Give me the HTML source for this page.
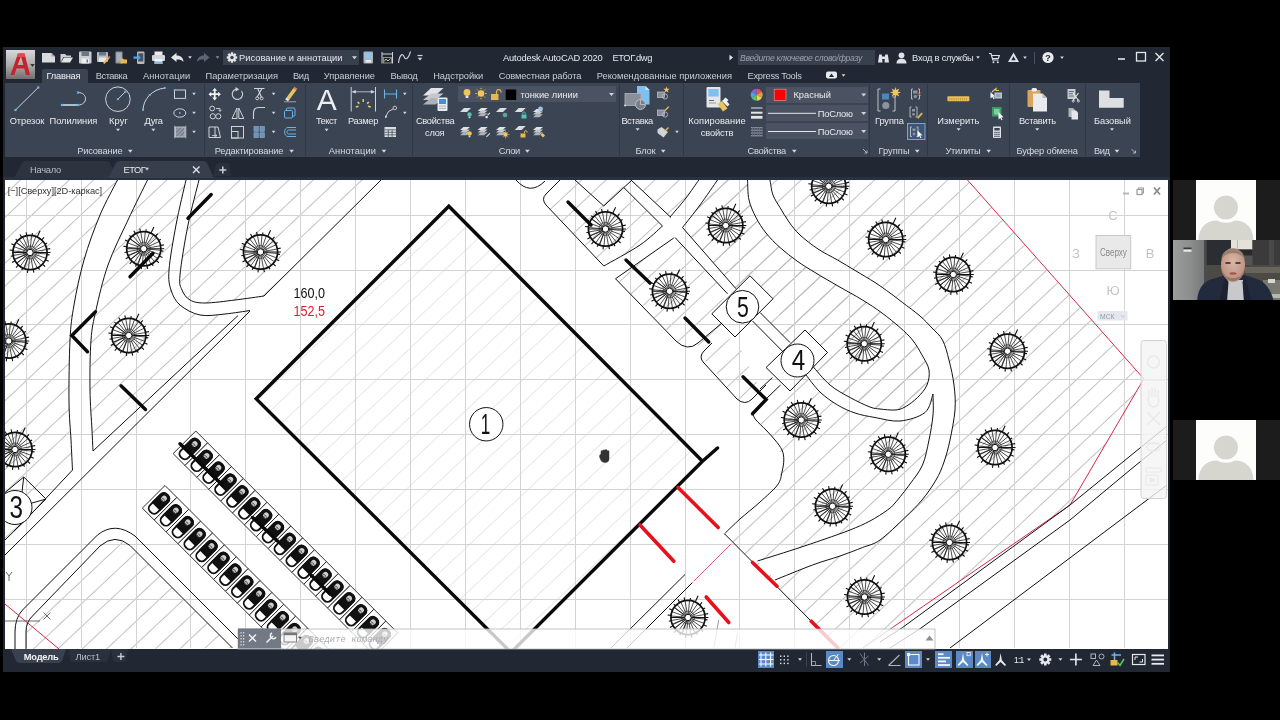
<!DOCTYPE html>
<html><head><meta charset="utf-8"><title>AutoCAD</title>
<style>
html,body{margin:0;padding:0;background:#000;}
body{width:1280px;height:720px;position:relative;overflow:hidden;font-family:"Liberation Sans","DejaVu Sans",sans-serif;}
.a,.t,svg{position:absolute;}
.t{white-space:nowrap;}
</style></head><body>
<div class="a" style="left:3px;top:47px;width:1167px;height:625px;background:#222833;"></div>
<div class="a" style="left:5px;top:83px;width:1135px;height:74px;background:#3b4453;"></div>
<div class="a" style="left:42px;top:69px;width:46px;height:15px;background:#3b4453;border-radius:2px 2px 0 0;"></div>
<div class="a" style="left:6px;top:50px;width:29px;height:29px;background:linear-gradient(180deg,#d9d9d9 0%,#a9a9a9 55%,#6f6f6f 100%);"></div>
<div class="a" style="left:223px;top:50px;width:136px;height:15px;background:#38404e;"></div>
<div class="a" style="left:738px;top:50px;width:137px;height:15px;background:#38404e;"></div>
<div class="a" style="left:204px;top:84px;width:1px;height:72px;background:#2f3644;"></div>
<div class="a" style="left:305px;top:84px;width:1px;height:72px;background:#2f3644;"></div>
<div class="a" style="left:412px;top:84px;width:1px;height:72px;background:#2f3644;"></div>
<div class="a" style="left:619px;top:84px;width:1px;height:72px;background:#2f3644;"></div>
<div class="a" style="left:683px;top:84px;width:1px;height:72px;background:#2f3644;"></div>
<div class="a" style="left:869px;top:84px;width:1px;height:72px;background:#2f3644;"></div>
<div class="a" style="left:927px;top:84px;width:1px;height:72px;background:#2f3644;"></div>
<div class="a" style="left:1009px;top:84px;width:1px;height:72px;background:#2f3644;"></div>
<div class="a" style="left:1085px;top:84px;width:1px;height:72px;background:#2f3644;"></div>
<div class="a" style="left:458px;top:86px;width:158px;height:16px;background:#4b5363;"></div>
<div class="a" style="left:766px;top:87px;width:102px;height:16px;background:#4b5363;"></div>
<div class="a" style="left:766px;top:105px;width:102px;height:16px;background:#4b5363;"></div>
<div class="a" style="left:766px;top:123px;width:102px;height:16px;background:#4b5363;"></div>
<div class="a" style="left:3px;top:177px;width:1167px;height:3px;background:#2b313c;"></div>
<svg style="left:0;top:157px" width="1170" height="23" viewBox="0 157 1170 23"><path d="M14 178 L22 163 Q23 161 26 161 L106 161 Q109 161 110 163 L117 178 Z" fill="#2d3440"/><path d="M108 178 L116 163 Q117 161 120 161 L203 161 Q206 161 207 163 L214 178 Z" fill="#373f4d"/><path d="M213 176 L216 165 Q217 163 219 163 L227 163 Q229 163 229.500 165 L231 176 Z" fill="#2b313c"/></svg>
<svg style="left:0;top:648px" width="300" height="24" viewBox="0 648 300 24"><path d="M11 649 L66 649 L62 661 Q61 663 58 663 L20 663 Q17 663 16 661 Z" fill="#39414f"/><path d="M68 649 L111 649 L108 660 Q107 662 105 662 L73 662 Q71 662 70 660 Z" fill="#2a313c"/><path d="M111 649 L128 649 L126 660 Q125 662 123 662 L116 662 Q114 662 113 660 Z" fill="#2a313c"/></svg>
<div class="a" style="left:758px;top:651px;width:16px;height:17px;background:#5a8ac6;"></div>
<div class="a" style="left:826px;top:651px;width:17px;height:17px;background:#5a8ac6;"></div>
<div class="a" style="left:905px;top:651px;width:17px;height:17px;background:#5a8ac6;"></div>
<div class="a" style="left:935px;top:651px;width:17px;height:17px;background:#5a8ac6;"></div>
<div class="a" style="left:955.5px;top:651px;width:17.0px;height:17px;background:#5a8ac6;"></div>
<div class="a" style="left:974.5px;top:651px;width:16.5px;height:17px;background:#5a8ac6;"></div>
<!--ICONS-->
<div class="a" style="left:5px;top:180px;width:1163px;height:469px;background:#fff;"></div><svg style="left:5px;top:180px;will-change:transform" width="1163" height="469" viewBox="5 180 1163 469"><defs>
<pattern id="h1" width="60" height="16.703" patternUnits="userSpaceOnUse" patternTransform="translate(954.28 391.41) rotate(-43.2)"><path d="M-1 8.351 L61 8.351" stroke="#b9b9b9" stroke-width="0.9" fill="none"/></pattern>
<pattern id="h2" width="60" height="16.703" patternUnits="userSpaceOnUse" patternTransform="translate(382.58 293.91) rotate(-43.2)"><path d="M-1 8.351 L61 8.351" stroke="#e4e4e4" stroke-width="0.9" fill="none"/></pattern>
<g id="tree">
<circle r="17.1" fill="none" stroke="#111" stroke-width="1.7"/>
<path d="M3.2 0.3 L16.9 1.5 M3.0 1.1 L16.0 5.8 M2.6 1.8 L13.9 9.8 M2.1 2.5 L10.9 13.0 M1.4 2.9 L7.2 15.4 M0.6 3.2 L3.0 16.7 M-0.3 3.2 L-1.5 16.9 M-1.1 3.0 L-5.8 16.0 M-1.8 2.6 L-9.8 13.9 M-2.5 2.1 L-13.0 10.9 M-2.9 1.4 L-15.4 7.2 M-3.2 0.6 L-16.7 3.0 M-3.2 -0.3 L-16.9 -1.5 M-3.0 -1.1 L-16.0 -5.8 M-2.6 -1.8 L-13.9 -9.8 M-2.1 -2.5 L-10.9 -13.0 M-1.4 -2.9 L-7.2 -15.4 M-0.6 -3.2 L-3.0 -16.7 M0.3 -3.2 L1.5 -16.9 M1.1 -3.0 L5.8 -16.0 M1.8 -2.6 L9.8 -13.9 M2.5 -2.1 L13.0 -10.9 M2.9 -1.4 L15.4 -7.2 M3.2 -0.6 L16.7 -3.0 M-1.2 3.0 L-6.4 15.8 M-2.5 2.0 L-13.4 10.5 M-2.9 1.3 L-15.6 6.6 M-2.6 -1.9 L-13.6 -10.2" stroke="#111" stroke-width="0.75" fill="none"/>
<path d="M16.9 2.1 L19.5 2.4 M15.4 7.2 L18.7 8.7 M12.4 11.6 L15.1 14.0 M8.2 14.9 L9.5 17.1 M3.2 16.7 L3.9 20.2 M-2.1 16.9 L-2.5 20.4 M-7.2 15.4 L-8.3 17.8 M-11.6 12.4 L-14.0 15.1 M-14.9 8.2 L-18.0 10.0 M-16.7 3.2 L-19.2 3.7 M-16.9 -2.1 L-20.4 -2.5 M-15.4 -7.2 L-18.7 -8.7 M-12.4 -11.6 L-14.3 -13.4 M-8.2 -14.9 L-10.0 -18.0 M-3.2 -16.7 L-3.9 -20.2 M2.1 -16.9 L2.4 -19.5 M7.2 -15.4 L10.1 -21.8 M11.6 -12.4 L14.0 -15.1 M14.9 -8.2 L17.1 -9.5 M16.7 -3.2 L20.2 -3.9 M-17 0 L-3.200 0 M3.200 0 L20.500 0" stroke="#111" stroke-width="1.1" fill="none"/>
<circle r="6.5" fill="none" stroke="#222" stroke-width="0.6"/>
<circle r="3.2" fill="#fff" stroke="#111" stroke-width="1"/>
</g>
<g id="car">
<rect x="0" y="0" width="16.8" height="32" fill="#fff" stroke="#222" stroke-width="0.9"/>
<rect x="3.300" y="5" width="10.400" height="24" rx="4.600" fill="#fff" stroke="#111" stroke-width="1.9"/>
<path d="M3.300 9.600 Q3.300 5 8.500 5 Q13.700 5 13.700 9.600 L13.700 20.500 L3.300 20.500 Z" fill="#111" stroke="#111" stroke-width="1.9"/>
<ellipse cx="8.500" cy="10" rx="2.700" ry="3" fill="#cfcfcf"/><path d="M6.500 11.200 Q8.500 9.400 10.500 11.200 M7 12.800 Q8.500 11.600 10 12.800" stroke="#333" stroke-width="0.7" fill="none"/>
</g>
</defs>
<path d="M5.0 180.0 L967.5 180.0 L1143.8 378.8 L1070.0 505.0 L892.5 627.5 L863.0 648.0 L5.0 648.0 Z" fill="url(#h1)" stroke="none"/>
<path d="M381.0 180.0 L264.0 296.0 L250.0 311.0 L238.0 315.6 L93.0 451.0 L72.5 470.0 L5.0 540.0 L5.0 648.0 L837.5 648.0 L815.0 625.0 L724.5 533.8 L740.0 519.0 L777.5 485.0 L783.8 460.0 L775.0 440.0 L756.0 420.0 L752.5 413.8 L766.0 399.5 L790.0 391.0 L827.5 352.5 L805.0 330.0 L790.0 342.5 L773.0 298.8 L750.0 275.8 L736.0 288.8 L682.5 227.5 L700.0 205.0 L717.5 180.0 Z" fill="#fff" stroke="none"/>
<path d="M117.5 180.0 L100.0 215.0 L84.0 260.0 L74.0 305.0 L70.0 340.0 L69.0 402.0 L71.0 440.0 L72.5 470.0 L93.0 451.0 L92.0 430.0 L90.0 390.0 L91.0 340.0 L96.0 310.0 L108.0 265.0 L128.0 220.0 L147.5 180.0 Z" fill="#fff" stroke="none"/>
<path d="M186.0 180.0 C184.3 187.5 178.8 210.0 176.0 225.0 C173.2 240.0 169.8 259.2 169.0 270.0 C168.2 280.8 169.2 284.2 171.0 290.0 C172.8 295.8 175.2 300.8 180.0 305.0 C184.8 309.2 192.5 313.5 200.0 315.0 C207.5 316.5 216.7 314.8 225.0 314.0 C233.3 313.2 245.8 311.1 250.0 310.5 L264 296 L264.0 296.0 C259.2 296.7 244.8 298.8 235.0 300.0 C225.2 301.2 212.5 303.0 205.0 303.0 C197.5 303.0 193.8 302.2 190.0 300.0 C186.2 297.8 183.7 294.2 182.0 290.0 C180.3 285.8 179.0 285.8 180.0 275.0 C181.0 264.2 184.8 240.8 188.0 225.0 C191.2 209.2 197.2 187.5 199.0 180.0 Z" fill="#fff" stroke="none"/>
<path d="M770.0 180.0 C770.5 182.5 771.3 190.4 773.0 195.0 C774.7 199.6 777.3 203.0 780.0 207.5 C782.7 212.0 785.7 217.4 789.0 222.0 C792.3 226.6 795.2 230.5 800.0 235.0 C804.8 239.5 811.8 244.8 818.0 249.0 C824.2 253.2 831.2 256.3 837.5 260.0 C843.8 263.7 849.8 267.2 856.0 271.0 C862.2 274.8 869.3 278.8 875.0 282.5 C880.7 286.2 885.4 289.7 890.0 293.0 C894.6 296.3 897.5 298.7 902.5 302.5 C907.5 306.3 915.1 311.8 920.0 316.0 C924.9 320.2 928.2 324.0 932.0 328.0 C935.8 332.0 939.7 334.7 942.5 340.0 C945.3 345.3 947.1 352.5 949.0 360.0 C950.9 367.5 953.0 376.7 954.0 385.0 C955.0 393.3 955.7 400.8 955.0 410.0 C954.3 419.2 951.8 431.3 950.0 440.0 C948.2 448.7 946.3 455.3 944.0 462.0 C941.7 468.7 939.7 473.7 936.0 480.0 C932.3 486.3 927.2 493.8 922.0 500.0 C916.8 506.2 912.0 510.8 905.0 517.5 C898.0 524.2 887.1 535.0 880.0 540.0 C872.9 545.0 869.2 544.8 862.5 547.5 C855.8 550.2 848.3 553.1 840.0 556.0 C831.7 558.9 823.3 561.0 812.5 565.0 C801.7 569.0 781.2 577.5 775.0 580.0 L757.5 561 L757.5 561.0 C764.6 558.8 788.8 551.2 800.0 547.5 C811.2 543.8 816.7 541.9 825.0 539.0 C833.3 536.1 842.5 533.0 850.0 530.0 C857.5 527.0 863.8 524.3 870.0 521.0 C876.2 517.7 883.3 513.0 887.5 510.0 C891.7 507.0 891.2 507.3 895.0 503.0 C898.8 498.7 905.4 490.3 910.0 484.0 C914.6 477.7 919.3 472.3 922.5 465.0 C925.7 457.7 927.2 448.3 929.0 440.0 C930.8 431.7 932.3 422.7 933.0 415.0 C933.7 407.3 933.0 397.5 933.0 394.0 L927 385 L927.0 385.0 C927.3 382.5 929.8 375.0 929.0 370.0 C928.2 365.0 924.8 360.0 922.0 355.0 C919.2 350.0 916.2 344.6 912.5 340.0 C908.8 335.4 905.1 332.0 900.0 327.5 C894.9 323.0 888.2 317.6 882.0 313.0 C875.8 308.4 869.8 304.5 862.5 300.0 C855.2 295.5 845.9 290.6 838.0 286.0 C830.1 281.4 821.8 276.7 815.0 272.5 C808.2 268.3 802.8 265.2 797.0 261.0 C791.2 256.8 785.2 252.2 780.0 247.5 C774.8 242.8 770.0 238.0 766.0 233.0 C762.0 228.0 758.8 223.0 756.0 217.5 C753.2 212.0 750.4 206.2 749.0 200.0 C747.6 193.8 747.8 183.3 747.5 180.0 Z" fill="#fff" stroke="none"/>
<path d="M929.0 370.0 C928.7 372.5 928.9 380.4 927.0 385.0 C925.1 389.6 921.2 393.8 917.5 397.5 C913.8 401.2 908.8 404.9 905.0 407.0 C901.2 409.1 899.2 409.7 895.0 410.0 C890.8 410.3 884.2 409.5 880.0 409.0 C875.8 408.5 875.0 408.9 870.0 407.0 C865.0 405.1 856.7 401.2 850.0 397.5 C843.3 393.8 836.2 390.2 830.0 385.0 C823.8 379.8 815.4 369.2 812.5 366.0 L806 375 L806.0 375.0 C808.3 377.8 814.8 387.0 820.0 392.0 C825.2 397.0 831.7 401.5 837.5 405.0 C843.3 408.5 848.8 410.9 855.0 413.0 C861.2 415.1 867.5 416.2 875.0 417.5 C882.5 418.8 891.7 421.8 900.0 421.0 C908.3 420.2 919.5 417.0 925.0 412.5 C930.5 408.0 931.7 397.1 933.0 394.0 Z" fill="#fff" stroke="none"/>
<path d="M448.8 206.2 L256.2 398.8 L511.0 652.5 L702.5 461.2 Z" fill="url(#h2)" stroke="none"/>
<path d="M26 650 L26 632 Q26 622 32.500 616 L100 546 Q115 533 130 545.500 L232.500 648 Z" fill="url(#h1)" stroke="none"/>
<path d="M560.0 180.0 L543.8 196.0 L550.0 210.0 L603.8 266.0 L640.0 245.0 L662.5 226.0 L623.8 187.5 L617.0 180.0 Z" fill="url(#h1)" stroke="none"/>
<path d="M615.5 278.8 L673.8 238.0 L727.5 293.8 L711.8 313.8 L725.0 325.0 L700.0 345.0 L687.5 347.5 L680.0 343.0 Z" fill="url(#h1)" stroke="none"/>
<path d="M702.5 357.5 L710.0 345.0 L735.0 337.0 L760.0 389.0 L747.5 402.5 L740.0 401.0 Z" fill="url(#h1)" stroke="none"/>
<path d="M682.5 227.5 L700.0 205.0 L717.5 180.0 L747.5 180.0 L749.0 200.0 L756.0 217.5 L766.0 233.0 L780.0 247.5 L797.0 261.0 L815.0 272.5 L838.0 286.0 L862.5 300.0 L882.0 313.0 L900.0 327.5 L912.5 340.0 L922.0 355.0 L929.0 370.0 L927.0 385.0 L917.5 397.5 L905.0 407.0 L895.0 410.0 L880.0 409.0 L870.0 407.0 L850.0 397.5 L830.0 385.0 L812.5 366.0 L827.5 352.5 L805.0 330.0 L790.0 342.5 L760.0 312.5 L773.0 298.8 L750.0 275.8 L736.0 288.8 Z" fill="url(#h1)" stroke="none"/>
<path d="M631.0 180.0 L671.0 217.5 L698.8 180.0 Z" fill="url(#h1)" stroke="none"/>
<path d="M26.5 180 L26.5 648 M81.5 180 L81.5 648 M136.5 180 L136.5 648 M190.5 180 L190.5 648 M245.5 180 L245.5 648 M300.5 180 L300.5 648 M355.5 180 L355.5 648 M410.5 180 L410.5 648 M465.5 180 L465.5 648 M520.5 180 L520.5 648 M575.5 180 L575.5 648 M630.5 180 L630.5 648 M685.5 180 L685.5 648 M739.5 180 L739.5 648 M794.5 180 L794.5 648 M849.5 180 L849.5 648 M904.5 180 L904.5 648 M959.5 180 L959.5 648 M1014.5 180 L1014.5 648 M1069.5 180 L1069.5 648 M1124.5 180 L1124.5 648 M5 215.5 L1168 215.5 M5 270.5 L1168 270.5 M5 324.5 L1168 324.5 M5 379.5 L1168 379.5 M5 434.5 L1168 434.5 M5 489.5 L1168 489.5 M5 544.5 L1168 544.5 M5 599.5 L1168 599.5" stroke="#d3d3d3" stroke-width="1" fill="none"/>
<path d="M117.5 180.0 C114.6 185.8 105.6 201.7 100.0 215.0 C94.4 228.3 88.3 245.0 84.0 260.0 C79.7 275.0 76.3 291.7 74.0 305.0 C71.7 318.3 70.8 323.8 70.0 340.0 C69.2 356.2 68.8 385.3 69.0 402.0 C69.2 418.7 70.4 428.7 71.0 440.0 C71.6 451.3 72.2 465.0 72.5 470.0 L26 519.5 L5 540" fill="none" stroke="#111" stroke-width="1" />
<path d="M147.5 180.0 C144.2 186.7 134.6 205.8 128.0 220.0 C121.4 234.2 113.3 250.0 108.0 265.0 C102.7 280.0 98.8 297.5 96.0 310.0 C93.2 322.5 92.0 326.7 91.0 340.0 C90.0 353.3 89.8 375.0 90.0 390.0 C90.2 405.0 91.5 419.8 92.0 430.0 C92.5 440.2 92.8 447.5 93.0 451.0 L238 315.6" fill="none" stroke="#111" stroke-width="1" />
<path d="M186.0 180.0 C184.3 187.5 178.8 210.0 176.0 225.0 C173.2 240.0 169.8 259.2 169.0 270.0 C168.2 280.8 169.2 284.2 171.0 290.0 C172.8 295.8 175.2 300.8 180.0 305.0 C184.8 309.2 192.5 313.5 200.0 315.0 C207.5 316.5 216.7 314.8 225.0 314.0 C233.3 313.2 245.8 311.1 250.0 310.5" fill="none" stroke="#111" stroke-width="1" />
<path d="M199.0 180.0 C197.2 187.5 191.2 209.2 188.0 225.0 C184.8 240.8 181.0 264.2 180.0 275.0 C179.0 285.8 180.3 285.8 182.0 290.0 C183.7 294.2 186.2 297.8 190.0 300.0 C193.8 302.2 197.5 303.0 205.0 303.0 C212.5 303.0 225.2 301.2 235.0 300.0 C244.8 298.8 259.2 296.7 264.0 296.0 L381 180" fill="none" stroke="#111" stroke-width="1" />
<path d="M5 555 L250 311" fill="none" stroke="#111" stroke-width="1" />
<path d="M15 650 L15 632 Q15 618 22.500 610 L97.500 535 Q115 521 135 536 L247 648" fill="none" stroke="#111" stroke-width="1" />
<path d="M26 650 L26 632 Q26 622 32.500 616 L100 546 Q115 533 130 545.500 L232.500 648" fill="none" stroke="#111" stroke-width="1" />
<path d="M5.0 492.5 L23.8 477.0 L46.0 499.0 L14.0 531.0" fill="none" stroke="#111" stroke-width="1" />
<path d="M23.750 477 L22 492 M46 499 L32 503" fill="none" stroke="#111" stroke-width="1" />
<circle cx="15" cy="507.5" r="17" fill="#fff" stroke="#111" stroke-width="1"/>
<path d="M770.0 180.0 C770.5 182.5 771.3 190.4 773.0 195.0 C774.7 199.6 777.3 203.0 780.0 207.5 C782.7 212.0 785.7 217.4 789.0 222.0 C792.3 226.6 795.2 230.5 800.0 235.0 C804.8 239.5 811.8 244.8 818.0 249.0 C824.2 253.2 831.2 256.3 837.5 260.0 C843.8 263.7 849.8 267.2 856.0 271.0 C862.2 274.8 869.3 278.8 875.0 282.5 C880.7 286.2 885.4 289.7 890.0 293.0 C894.6 296.3 897.5 298.7 902.5 302.5 C907.5 306.3 915.1 311.8 920.0 316.0 C924.9 320.2 928.2 324.0 932.0 328.0 C935.8 332.0 939.7 334.7 942.5 340.0 C945.3 345.3 947.1 352.5 949.0 360.0 C950.9 367.5 953.0 376.7 954.0 385.0 C955.0 393.3 955.7 400.8 955.0 410.0 C954.3 419.2 951.8 431.3 950.0 440.0 C948.2 448.7 946.3 455.3 944.0 462.0 C941.7 468.7 939.7 473.7 936.0 480.0 C932.3 486.3 927.2 493.8 922.0 500.0 C916.8 506.2 912.0 510.8 905.0 517.5 C898.0 524.2 887.1 535.0 880.0 540.0 C872.9 545.0 869.2 544.8 862.5 547.5 C855.8 550.2 848.3 553.1 840.0 556.0 C831.7 558.9 823.3 561.0 812.5 565.0 C801.7 569.0 781.2 577.5 775.0 580.0" fill="none" stroke="#111" stroke-width="1" />
<path d="M747.5 180.0 C747.8 183.3 747.6 193.8 749.0 200.0 C750.4 206.2 753.2 212.0 756.0 217.5 C758.8 223.0 762.0 228.0 766.0 233.0 C770.0 238.0 774.8 242.8 780.0 247.5 C785.2 252.2 791.2 256.8 797.0 261.0 C802.8 265.2 808.2 268.3 815.0 272.5 C821.8 276.7 830.1 281.4 838.0 286.0 C845.9 290.6 855.2 295.5 862.5 300.0 C869.8 304.5 875.8 308.4 882.0 313.0 C888.2 317.6 894.9 323.0 900.0 327.5 C905.1 332.0 908.8 335.4 912.5 340.0 C916.2 344.6 919.2 350.0 922.0 355.0 C924.8 360.0 928.2 365.0 929.0 370.0 C929.8 375.0 928.9 380.4 927.0 385.0 C925.1 389.6 921.2 393.8 917.5 397.5 C913.8 401.2 908.8 404.9 905.0 407.0 C901.2 409.1 899.2 409.7 895.0 410.0 C890.8 410.3 884.2 409.5 880.0 409.0 C875.8 408.5 875.0 408.9 870.0 407.0 C865.0 405.1 856.7 401.2 850.0 397.5 C843.3 393.8 836.2 390.2 830.0 385.0 C823.8 379.8 815.4 369.2 812.5 366.0" fill="none" stroke="#111" stroke-width="1" />
<path d="M933.0 394.0 C933.0 397.5 933.7 407.3 933.0 415.0 C932.3 422.7 930.8 431.7 929.0 440.0 C927.2 448.3 925.7 457.7 922.5 465.0 C919.3 472.3 914.6 477.7 910.0 484.0 C905.4 490.3 898.8 498.7 895.0 503.0 C891.2 507.3 891.7 507.0 887.5 510.0 C883.3 513.0 876.2 517.7 870.0 521.0 C863.8 524.3 857.5 527.0 850.0 530.0 C842.5 533.0 833.3 536.1 825.0 539.0 C816.7 541.9 811.2 543.8 800.0 547.5 C788.8 551.2 764.6 558.8 757.5 561.0" fill="none" stroke="#111" stroke-width="1" />
<path d="M806.0 375.0 C808.3 377.8 814.8 387.0 820.0 392.0 C825.2 397.0 831.7 401.5 837.5 405.0 C843.3 408.5 848.8 410.9 855.0 413.0 C861.2 415.1 867.5 416.2 875.0 417.5 C882.5 418.8 891.7 421.8 900.0 421.0 C908.3 420.2 919.5 417.0 925.0 412.5 C930.5 408.0 931.7 397.1 933.0 394.0" fill="none" stroke="#111" stroke-width="1" />
<path d="M752.5 413.8 C753.1 414.8 753.8 417.3 756.0 420.0 C758.2 422.7 762.8 426.7 766.0 430.0 C769.2 433.3 772.3 436.7 775.0 440.0 C777.7 443.3 780.5 446.7 782.0 450.0 C783.5 453.3 783.8 456.3 783.8 460.0 C783.8 463.7 783.0 467.8 782.0 472.0 C781.0 476.2 781.2 480.0 777.5 485.0 C773.8 490.0 766.2 496.3 760.0 502.0 C753.8 507.7 745.9 513.7 740.0 519.0 C734.1 524.3 727.1 531.3 724.5 533.8 L815 625" fill="none" stroke="#111" stroke-width="1" />
<path d="M777.5 480 L724.5 533.75" fill="none" stroke="#111" stroke-width="0" />
<path d="M750.0 275.8 L773.0 298.8 L735.0 337.0 L711.8 313.8 Z" fill="none" stroke="#111" stroke-width="1" />
<path d="M805.0 330.0 L827.5 352.5 L790.0 391.0 L766.0 367.5 Z" fill="none" stroke="#111" stroke-width="1" />
<path d="M760 312.500 L790 342.500 M752.500 321 L783.750 352.500" fill="none" stroke="#111" stroke-width="1" />
<path d="M736 288.750 L682.500 227.500 M727.500 293.750 L675 237.500" fill="none" stroke="#111" stroke-width="1" />
<path d="M772.500 377.500 L760 389 M780.500 385 L766 399" fill="none" stroke="#111" stroke-width="1" />
<path d="M682.5 227.5 C685.4 223.8 694.2 212.9 700.0 205.0 C705.8 197.1 714.6 184.2 717.5 180.0" fill="none" stroke="#111" stroke-width="1" />
<path d="M670.0 217.0 C672.7 213.8 681.2 204.2 686.0 198.0 C690.8 191.8 696.6 183.0 698.8 180.0" fill="none" stroke="#111" stroke-width="1" />
<path d="M662.500 226 L623.750 187.500 M671 217.500 L631 180" fill="none" stroke="#111" stroke-width="1" />
<path d="M662.5 226.0 C658.8 229.2 649.8 238.3 640.0 245.0 C630.2 251.7 609.8 262.5 603.8 266.0" fill="none" stroke="#111" stroke-width="1" />
<path d="M673.750 238 L615.500 278.750" fill="none" stroke="#111" stroke-width="1" />
<path d="M560 180 L546 194 Q541 199 546 205 L603.750 266" fill="none" stroke="#111" stroke-width="1" />
<path d="M575 180 L603.750 206 L632 180" fill="none" stroke="#111" stroke-width="1" />
<path d="M516 180 Q530 196 545 181" fill="none" stroke="#111" stroke-width="1" />
<path d="M615.500 278.750 L676 341 Q687.500 352 698 343 L722 323" fill="none" stroke="#111" stroke-width="1" />
<path d="M711.750 313.750 L727.500 293.750" fill="none" stroke="#111" stroke-width="0" />
<path d="M712 343 L704 351 Q698 357 704 363 L737 399 Q745 406 752 399 L766 385" fill="none" stroke="#111" stroke-width="1" />
<path d="M967.5 180.0 L1143.8 378.8 L1070.0 505.0 L892.5 627.5 L863.0 648.0" fill="none" stroke="#d8274a" stroke-width="1" />
<path d="M5 604 L59 649" fill="none" stroke="#d8274a" stroke-width="1" />
<path d="M731.250 543.750 L693.750 581.250" fill="none" stroke="#e0607a" stroke-width="1" />
<path d="M920 610 L892.500 627.500" fill="none" stroke="#d8274a" stroke-width="0" />
<path d="M1167 426 L1070 505 L902.500 627.500 L880 642" fill="none" stroke="#111" stroke-width="1" />
<path d="M1167 440 L1130 470 L1070 520 L920 628.750 L890 648" fill="none" stroke="#111" stroke-width="1" />
<path d="M1167 485 L950 648" fill="none" stroke="#111" stroke-width="1" />
<path d="M685 574.500 L611 648 M692.500 582.500 L627 648" fill="none" stroke="#111" stroke-width="1" />
<path d="M718.750 620 L713.750 647.500 M737.500 632.500 L735 648" fill="none" stroke="#555" stroke-width="0.6" />
<g transform="translate(195.75 431) rotate(45)"><use href="#car" x="0.0" y="0"/><use href="#car" x="16.8" y="0"/><use href="#car" x="33.6" y="0"/><use href="#car" x="50.4" y="0"/><use href="#car" x="67.2" y="0"/><use href="#car" x="84.0" y="0"/><use href="#car" x="100.8" y="0"/><use href="#car" x="117.6" y="0"/><use href="#car" x="134.4" y="0"/><use href="#car" x="151.2" y="0"/><use href="#car" x="168.0" y="0"/><use href="#car" x="184.8" y="0"/><use href="#car" x="201.6" y="0"/><use href="#car" x="218.4" y="0"/><use href="#car" x="235.2" y="0"/><use href="#car" x="252.0" y="0"/><use href="#car" x="268.8" y="0"/></g>
<g transform="translate(165 485.5) rotate(45)"><use href="#car" x="0.0" y="0"/><use href="#car" x="16.8" y="0"/><use href="#car" x="33.6" y="0"/><use href="#car" x="50.4" y="0"/><use href="#car" x="67.2" y="0"/><use href="#car" x="84.0" y="0"/><use href="#car" x="100.8" y="0"/><use href="#car" x="117.6" y="0"/><use href="#car" x="134.4" y="0"/><use href="#car" x="151.2" y="0"/><use href="#car" x="168.0" y="0"/><use href="#car" x="184.8" y="0"/><use href="#car" x="201.6" y="0"/><use href="#car" x="218.4" y="0"/><use href="#car" x="235.2" y="0"/></g>
<use href="#tree" transform="translate(30 252.5)"/>
<use href="#tree" transform="translate(143.75 248.75)"/>
<use href="#tree" transform="translate(260.5 252)"/>
<use href="#tree" transform="translate(128.75 335.5)"/>
<use href="#tree" transform="translate(8.75 341)"/>
<use href="#tree" transform="translate(15 449.5)"/>
<use href="#tree" transform="translate(605.5 229)"/>
<use href="#tree" transform="translate(725.75 225.5)"/>
<use href="#tree" transform="translate(828.75 186.25)"/>
<use href="#tree" transform="translate(885.75 239.5)"/>
<use href="#tree" transform="translate(669.5 291.25)"/>
<use href="#tree" transform="translate(864.25 343.75)"/>
<use href="#tree" transform="translate(953.25 274.5)"/>
<use href="#tree" transform="translate(1007.5 351.25)"/>
<use href="#tree" transform="translate(801.25 420)"/>
<use href="#tree" transform="translate(888.25 454.25)"/>
<use href="#tree" transform="translate(832.5 506.25)"/>
<use href="#tree" transform="translate(995 447.5)"/>
<use href="#tree" transform="translate(688 617.5)"/>
<use href="#tree" transform="translate(864.5 597)"/>
<use href="#tree" transform="translate(949.5 542.5)"/>
<path d="M188.0 218.2 L211.2 194.5" stroke="#0a0a0a" stroke-width="3.4" fill="none" stroke-linecap="round" stroke-linejoin="miter"/>
<path d="M130.0 276.8 L153.0 253.2" stroke="#0a0a0a" stroke-width="3.4" fill="none" stroke-linecap="round" stroke-linejoin="miter"/>
<path d="M95.5 311.8 L71.8 335.5 L87.5 351.8" stroke="#0a0a0a" stroke-width="3.4" fill="none" stroke-linecap="round" stroke-linejoin="miter"/>
<path d="M121.0 385.8 L145.5 409.5" stroke="#0a0a0a" stroke-width="3.4" fill="none" stroke-linecap="round" stroke-linejoin="miter"/>
<path d="M568.0 202.0 L591.0 225.0" stroke="#0a0a0a" stroke-width="3.4" fill="none" stroke-linecap="round" stroke-linejoin="miter"/>
<path d="M626.0 260.0 L650.0 283.0" stroke="#0a0a0a" stroke-width="3.4" fill="none" stroke-linecap="round" stroke-linejoin="miter"/>
<path d="M685.0 318.0 L708.8 342.0" stroke="#0a0a0a" stroke-width="3.4" fill="none" stroke-linecap="round" stroke-linejoin="miter"/>
<path d="M743.0 376.8 L766.2 399.5 L752.5 413.8" stroke="#0a0a0a" stroke-width="3.4" fill="none" stroke-linecap="round" stroke-linejoin="miter"/>
<path d="M180.0 443.8 L222.5 485.0" stroke="#0a0a0a" stroke-width="3.4" fill="none" stroke-linecap="round" stroke-linejoin="miter"/>
<path d="M252.5 517.5 L277.5 541.0" stroke="#0a0a0a" stroke-width="3.4" fill="none" stroke-linecap="round" stroke-linejoin="miter"/>
<path d="M311.0 575.0 L330.0 594.0" stroke="#0a0a0a" stroke-width="3.4" fill="none" stroke-linecap="round" stroke-linejoin="miter"/>
<path d="M448.8 206.2 L256.2 398.8 L511.0 652.5 L702.5 461.2 Z M702.500 461.250 L717.500 448" stroke="#0a0a0a" stroke-width="3.4" fill="none" stroke-linejoin="miter" stroke-linecap="round"/>
<path d="M678.0 487.5 L718.2 527.5" stroke="#e8101c" stroke-width="3.6" fill="none" stroke-linecap="round" stroke-linejoin="miter"/>
<path d="M640.0 525.0 L673.8 561.2" stroke="#e8101c" stroke-width="3.6" fill="none" stroke-linecap="round" stroke-linejoin="miter"/>
<path d="M752.5 562.5 L777.0 586.2" stroke="#e8101c" stroke-width="3.6" fill="none" stroke-linecap="round" stroke-linejoin="miter"/>
<path d="M706.2 597.0 L728.8 622.5" stroke="#e8101c" stroke-width="3.6" fill="none" stroke-linecap="round" stroke-linejoin="miter"/>
<path d="M811.2 621.2 L837.5 647.5" stroke="#e8101c" stroke-width="3.6" fill="none" stroke-linecap="round" stroke-linejoin="miter"/>
<circle cx="486.25" cy="424.25" r="16.7" fill="#fff" stroke="#111" stroke-width="1"/>
<circle cx="742.5" cy="306.75" r="16.3" fill="#fff" stroke="#111" stroke-width="1"/>
<circle cx="797.5" cy="360.5" r="16.5" fill="#fff" stroke="#111" stroke-width="1"/>
<text x="485.600" y="433.700" font-family="Liberation Sans, sans-serif" font-size="29" text-anchor="middle" fill="#111" textLength="9.5" lengthAdjust="spacingAndGlyphs">1</text>
<text x="742.800" y="316.700" font-family="Liberation Sans, sans-serif" font-size="29.5" text-anchor="middle" fill="#111" textLength="11.8" lengthAdjust="spacingAndGlyphs">5</text>
<text x="798.500" y="370.200" font-family="Liberation Sans, sans-serif" font-size="29" text-anchor="middle" fill="#111" textLength="13.5" lengthAdjust="spacingAndGlyphs">4</text>
<text x="16.200" y="517.500" font-family="Liberation Sans, sans-serif" font-size="31" text-anchor="middle" fill="#111" textLength="13.5" lengthAdjust="spacingAndGlyphs">3</text>
<text x="293.500" y="298" font-family="Liberation Sans, sans-serif" font-size="14.5" fill="#111" textLength="31.5" lengthAdjust="spacingAndGlyphs">160,0</text>
<text x="293.500" y="316" font-family="Liberation Sans, sans-serif" font-size="14.5" fill="#d8202c" textLength="31.5" lengthAdjust="spacingAndGlyphs">152,5</text>
<text x="7.700" y="193.500" font-family="Liberation Sans, sans-serif" font-size="9.300" fill="#333" textLength="94.5" lengthAdjust="spacing">[−][Сверху][2D-каркас]</text>
<path d="M5 621 L40 621" fill="none" stroke="#444" stroke-width="0.8" />
<path d="M43.500 612.500 L50.500 619.500 M50.500 612.500 L43.500 619.500" fill="none" stroke="#444" stroke-width="0.8" />
<path d="M6 572 L9 576 L12 572 M9 576 L9 581" fill="none" stroke="#444" stroke-width="0.8" />
<path d="M601 454 L601 451.500 Q601 450.500 602 450.500 Q603 450.500 603 451.500 L603 450.800 Q603 449.800 604 449.800 Q605 449.800 605 450.800 L605 450.600 Q605 449.600 606 449.600 Q607 449.600 607 450.600 L607 451.400 Q607 450.600 608 450.600 Q609 450.600 609 451.600 L609 459 Q609 462.500 605 462.500 Q601.500 462.500 600.500 459.500 L599.500 456.500 Q599.500 454.500 601 454 Z" fill="#333" stroke="#333" stroke-width="0.5" />
<rect x="1096" y="235.5" width="34.700" height="33.300" fill="#e9e9e9" stroke="#c9c9c9" stroke-width="1"/>
<text x="1113" y="220" font-family="Liberation Sans, sans-serif" font-size="13" text-anchor="middle" fill="#c4c4c4">С</text>
<text x="1076" y="257.5" font-family="Liberation Sans, sans-serif" font-size="13" text-anchor="middle" fill="#c4c4c4">З</text>
<text x="1150" y="257.5" font-family="Liberation Sans, sans-serif" font-size="13" text-anchor="middle" fill="#c4c4c4">В</text>
<text x="1113" y="295" font-family="Liberation Sans, sans-serif" font-size="13" text-anchor="middle" fill="#c4c4c4">Ю</text>
<text x="1113.400" y="256" font-family="Liberation Sans, sans-serif" font-size="10" text-anchor="middle" fill="#8a8a8a" textLength="27" lengthAdjust="spacingAndGlyphs">Сверху</text>
<rect x="1097.500" y="311" width="30" height="9.500" fill="#e6e6ee" stroke="none"/>
<text x="1100" y="319" font-family="Liberation Sans, sans-serif" font-size="7.500" fill="#9a9aa5" textLength="14.5" lengthAdjust="spacingAndGlyphs">МСК</text>
<path d="M1121 315 L1123 317.500 L1125 315" fill="none" stroke="#c0c0c8" stroke-width="0.8" />
<path d="M1123 193.500 L1129 193.500" fill="none" stroke="#b8b8b8" stroke-width="2" />
<rect x="1138.500" y="188" width="5" height="5" fill="none" stroke="#9a9a9a" stroke-width="1"/><rect x="1137" y="189.500" width="5" height="5" fill="#fff" stroke="#9a9a9a" stroke-width="1.2"/>
<path d="M1154 187.500 L1160 194.500 M1160 187.500 L1154 194.500" fill="none" stroke="#8a8a8a" stroke-width="1.8" />
<rect x="1141" y="340.500" width="25.500" height="158" rx="3" fill="#f4f4f4" fill-opacity="0.8" stroke="#d2d2d2" stroke-width="1"/>
<path d="M1143 380 L1164.500 380" fill="none" stroke="#e8e8e8" stroke-width="1" />
<circle cx="1153.500" cy="362" r="6" fill="none" stroke="#e9e9e9" stroke-width="1.5"/>
<path d="M1149 398 L1149 390 M1152 397 L1152 388 M1155 397 L1155 388 M1158 398 L1158 390 M1148 398 Q1148 407 1153.500 407 Q1159 407 1159 398" fill="none" stroke="#e8e8e8" stroke-width="1.3" />
<path d="M1147 412 L1160 425 M1160 412 L1147 425" fill="none" stroke="#e9e9e9" stroke-width="1.5" />
<ellipse cx="1153.500" cy="447" rx="7" ry="4" fill="none" stroke="#e9e9e9" stroke-width="1.3"/>
<rect x="1146" y="468" width="15" height="4" fill="none" stroke="#e9e9e9" stroke-width="1"/><rect x="1146" y="475" width="12" height="10" fill="none" stroke="#e9e9e9" stroke-width="1"/>
<path d="M1150 477.500 L1155 480 L1150 482.500 Z" fill="#ececec" stroke="#e9e9e9" stroke-width="1" /></svg>

<div class="a" style="left:1173px;top:180px;width:107px;height:60px;background:#1c1c1c;"></div>
<svg style="left:1196px;top:180px;" width="60" height="60" viewBox="0 0 60 60"><rect width="60" height="60" fill="#fdfdfb"/><circle cx="30" cy="27.5" r="12" fill="#d6d6cf"/><path d="M2.500 60 C3 45 13 40.500 21 40.500 C26 43.500 34 43.500 39 40.500 C47 40.500 57 45 57.500 60 Z" fill="#d6d6cf"/></svg>
<div class="a" style="left:1173px;top:420px;width:107px;height:60px;background:#1c1c1c;"></div>
<svg style="left:1196px;top:420px;" width="60" height="60" viewBox="0 0 60 60"><rect width="60" height="60" fill="#fdfdfb"/><circle cx="30" cy="27.5" r="12" fill="#d6d6cf"/><path d="M2.500 60 C3 45 13 40.500 21 40.500 C26 43.500 34 43.500 39 40.500 C47 40.500 57 45 57.500 60 Z" fill="#d6d6cf"/></svg>
<svg style="left:1173px;top:240px;" width="107" height="60" viewBox="0 0 107 60">
<defs>
<filter id="bl" x="-5%" y="-5%" width="110%" height="110%"><feGaussianBlur stdDeviation="0.7"/></filter>
<linearGradient id="fr" x1="0" x2="1" y1="0" y2="0"><stop offset="0" stop-color="#c9c9c7"/><stop offset="0.08" stop-color="#9a9c9b"/><stop offset="0.6" stop-color="#8b8e8d"/><stop offset="1" stop-color="#767978"/></linearGradient>
<radialGradient id="fc" cx="0.5" cy="0.4" r="0.6"><stop offset="0" stop-color="#d9b6a6"/><stop offset="1" stop-color="#b98f7e"/></radialGradient>
<clipPath id="cp"><rect width="107" height="60"/></clipPath>
</defs>
<g clip-path="url(#cp)"><g filter="url(#bl)">
<rect x="-2" y="-2" width="111" height="64" fill="#55544f"/>
<rect x="31" y="-2" width="27" height="27.500" fill="#2c2f31"/>
<rect x="58" y="-2" width="21.500" height="11.500" fill="#e4e1d9"/>
<rect x="64" y="-2" width="1" height="11.500" fill="#bdb9b0"/>
<rect x="58" y="9.500" width="21.500" height="6" fill="#2a2b2c"/>
<rect x="79.500" y="-2" width="30" height="28" fill="#3a3b3b"/>
<rect x="96" y="-2" width="5" height="28" fill="#4a4a48"/>
<rect x="33" y="25" width="76" height="18" fill="#4d4a45"/>
<rect x="72" y="27" width="36" height="6" fill="#6a655c"/>
<rect x="90" y="40" width="20" height="22" fill="#77786f"/>
<rect x="95" y="39" width="7" height="4" fill="#d8d8d0"/>
<rect x="98" y="54" width="12" height="4" fill="#b5b8ad"/>
<rect x="-2" y="-2" width="33" height="64" fill="url(#fr)"/>
<rect x="31" y="-2" width="2.500" height="64" fill="#4c4e4e"/>
<rect x="10.500" y="7.500" width="8" height="2" fill="#3b3b3b"/>
<rect x="10.500" y="9.500" width="8" height="2.200" fill="#ecece8"/>
<path d="M24 62 C25 47 31 41 41 38.500 L52 35 L72 35 L84 39 C93 42 98 50 101 62 Z" fill="#242b3d"/>
<path d="M53.500 40 L70.500 40 L71 62 L53.500 62 Z" fill="#c9c9cc"/>
<path d="M52 36 L55.500 42 L54 62 L46 62 Z" fill="#1d2333"/>
<path d="M72 36 L69.500 42 L71 62 L79 62 Z" fill="#1d2333"/>
<ellipse cx="60" cy="25" rx="12" ry="17" fill="url(#fc)"/>
<path d="M48.500 20 C48 5 72 5 71.500 20 C69 11 51 11 48.500 20 Z" fill="#9a8071"/>
<path d="M49 29 C50 45 70 45 71 29 C69 36 66 38 60 38 C54 38 51 36 49 29 Z" fill="#9b7565"/>
<ellipse cx="60" cy="33.500" rx="3.500" ry="1.300" fill="#a8544f"/>
<rect x="52.500" y="22" width="5" height="2" fill="#5a4038"/><rect x="62.500" y="22" width="5" height="2" fill="#5a4038"/>
</g></g>
</svg>

<div class="a" style="left:0;top:0;width:1280px;height:720px;will-change:transform">
<span class="t" style="left:46.5px;top:70.7px;font-size:9.3px;line-height:11px;color:#f0f2f5;letter-spacing:-0.23px;">Главная</span>
<span class="t" style="left:95.7px;top:70.7px;font-size:9.3px;line-height:11px;color:#c9cdd4;letter-spacing:-0.44px;">Вставка</span>
<span class="t" style="left:143.0px;top:70.7px;font-size:9.3px;line-height:11px;color:#c9cdd4;letter-spacing:0.10px;">Аннотации</span>
<span class="t" style="left:205.5px;top:70.7px;font-size:9.3px;line-height:11px;color:#c9cdd4;letter-spacing:-0.04px;">Параметризация</span>
<span class="t" style="left:293.0px;top:70.7px;font-size:9.3px;line-height:11px;color:#c9cdd4;letter-spacing:-0.38px;">Вид</span>
<span class="t" style="left:323.7px;top:70.7px;font-size:9.3px;line-height:11px;color:#c9cdd4;letter-spacing:-0.04px;">Управление</span>
<span class="t" style="left:390.5px;top:70.7px;font-size:9.3px;line-height:11px;color:#c9cdd4;letter-spacing:-0.22px;">Вывод</span>
<span class="t" style="left:433.2px;top:70.7px;font-size:9.3px;line-height:11px;color:#c9cdd4;letter-spacing:-0.12px;">Надстройки</span>
<span class="t" style="left:498.7px;top:70.7px;font-size:9.3px;line-height:11px;color:#c9cdd4;letter-spacing:-0.15px;">Совместная работа</span>
<span class="t" style="left:596.7px;top:70.7px;font-size:9.3px;line-height:11px;color:#c9cdd4;letter-spacing:0.01px;">Рекомендованные приложения</span>
<span class="t" style="left:747.5px;top:70.7px;font-size:9.3px;line-height:11px;color:#c9cdd4;letter-spacing:-0.28px;">Express Tools</span>
<span class="t" style="left:239.0px;top:52.7px;font-size:9.3px;line-height:11px;color:#e6e9ed;letter-spacing:0.04px;">Рисование и аннотации</span>
<span class="t" style="left:503.0px;top:52.7px;font-size:9.3px;line-height:11px;color:#e6e9ed;letter-spacing:-0.16px;">Autodesk AutoCAD 2020</span>
<span class="t" style="left:612.5px;top:52.7px;font-size:9.3px;line-height:11px;color:#e6e9ed;letter-spacing:-0.34px;">ЕТОГ.dwg</span>
<span class="t" style="left:740.0px;top:53.2px;font-size:8.6px;line-height:10px;color:#9aa1ad;letter-spacing:-0.25px;font-style:italic;">Введите ключевое слово/фразу</span>
<span class="t" style="left:912.0px;top:52.7px;font-size:9.3px;line-height:11px;color:#e6e9ed;letter-spacing:-0.21px;">Вход в службы</span>
<span class="t" style="left:9.7px;top:115.8px;font-size:9.3px;line-height:11px;color:#e8ebef;letter-spacing:-0.06px;">Отрезок</span>
<span class="t" style="left:49.5px;top:115.8px;font-size:9.3px;line-height:11px;color:#e8ebef;letter-spacing:-0.05px;">Полилиния</span>
<span class="t" style="left:109.0px;top:115.8px;font-size:9.3px;line-height:11px;color:#e8ebef;letter-spacing:0.12px;">Круг</span>
<span class="t" style="left:144.6px;top:115.8px;font-size:9.3px;line-height:11px;color:#e8ebef;letter-spacing:-0.40px;">Дуга</span>
<span class="t" style="left:315.9px;top:115.8px;font-size:9.3px;line-height:11px;color:#e8ebef;letter-spacing:-0.50px;">Текст</span>
<span class="t" style="left:348.0px;top:115.8px;font-size:9.3px;line-height:11px;color:#e8ebef;letter-spacing:-0.33px;">Размер</span>
<span class="t" style="left:415.9px;top:115.8px;font-size:9.3px;line-height:11px;color:#e8ebef;letter-spacing:-0.30px;">Свойства</span>
<span class="t" style="left:425.0px;top:128.0px;font-size:9.3px;line-height:11px;color:#e8ebef;letter-spacing:-0.27px;">слоя</span>
<span class="t" style="left:621.4px;top:115.8px;font-size:9.3px;line-height:11px;color:#e8ebef;letter-spacing:-0.47px;">Вставка</span>
<span class="t" style="left:688.3px;top:115.8px;font-size:9.3px;line-height:11px;color:#e8ebef;letter-spacing:0.08px;">Копирование</span>
<span class="t" style="left:700.8px;top:128.0px;font-size:9.3px;line-height:11px;color:#e8ebef;letter-spacing:-0.17px;">свойств</span>
<span class="t" style="left:875.0px;top:115.8px;font-size:9.3px;line-height:11px;color:#e8ebef;letter-spacing:-0.11px;">Группа</span>
<span class="t" style="left:937.3px;top:115.8px;font-size:9.3px;line-height:11px;color:#e8ebef;letter-spacing:0.00px;">Измерить</span>
<span class="t" style="left:1019.0px;top:115.8px;font-size:9.3px;line-height:11px;color:#e8ebef;letter-spacing:-0.34px;">Вставить</span>
<span class="t" style="left:1094.0px;top:115.8px;font-size:9.3px;line-height:11px;color:#e8ebef;letter-spacing:-0.07px;">Базовый</span>
<span class="t" style="left:77.3px;top:146.0px;font-size:9.3px;line-height:11px;color:#d5d9df;letter-spacing:-0.19px;">Рисование</span>
<span class="t" style="left:214.7px;top:146.0px;font-size:9.3px;line-height:11px;color:#d5d9df;letter-spacing:-0.16px;">Редактирование</span>
<span class="t" style="left:328.8px;top:146.0px;font-size:9.3px;line-height:11px;color:#d5d9df;letter-spacing:0.08px;">Аннотации</span>
<span class="t" style="left:498.7px;top:146.0px;font-size:9.3px;line-height:11px;color:#d5d9df;letter-spacing:-0.33px;">Слои</span>
<span class="t" style="left:635.6px;top:146.0px;font-size:9.3px;line-height:11px;color:#d5d9df;letter-spacing:-0.29px;">Блок</span>
<span class="t" style="left:747.5px;top:146.0px;font-size:9.3px;line-height:11px;color:#d5d9df;letter-spacing:-0.29px;">Свойства</span>
<span class="t" style="left:878.4px;top:146.0px;font-size:9.3px;line-height:11px;color:#d5d9df;letter-spacing:0.05px;">Группы</span>
<span class="t" style="left:945.4px;top:146.0px;font-size:9.3px;line-height:11px;color:#d5d9df;letter-spacing:-0.29px;">Утилиты</span>
<span class="t" style="left:1016.5px;top:146.0px;font-size:9.3px;line-height:11px;color:#d5d9df;letter-spacing:-0.16px;">Буфер обмена</span>
<span class="t" style="left:1094.0px;top:146.0px;font-size:9.3px;line-height:11px;color:#d5d9df;letter-spacing:-0.44px;">Вид</span>
<span class="t" style="left:520.4px;top:89.5px;font-size:9.3px;line-height:11px;color:#e8ebef;letter-spacing:-0.00px;">тонкие линии</span>
<span class="t" style="left:793.4px;top:90.0px;font-size:9.3px;line-height:11px;color:#e8ebef;letter-spacing:0.03px;">Красный</span>
<span class="t" style="left:817.7px;top:108.5px;font-size:9.3px;line-height:11px;color:#e8ebef;letter-spacing:-0.19px;">ПоСлою</span>
<span class="t" style="left:817.7px;top:126.5px;font-size:9.3px;line-height:11px;color:#e8ebef;letter-spacing:-0.19px;">ПоСлою</span>
<span class="t" style="left:30.0px;top:164.7px;font-size:9.3px;line-height:11px;color:#b9bec7;letter-spacing:-0.23px;">Начало</span>
<span class="t" style="left:123.5px;top:164.7px;font-size:9.3px;line-height:11px;color:#e8ebef;letter-spacing:-0.51px;">ЕТОГ*</span>
<span class="t" style="left:23.8px;top:651.6px;font-size:9.3px;line-height:11px;color:#f2f4f7;letter-spacing:-0.22px;font-weight:700;">Модель</span>
<span class="t" style="left:75.6px;top:651.6px;font-size:9.3px;line-height:11px;color:#b9bec7;letter-spacing:-0.19px;">Лист1</span>
<span class="t" style="left:1014.0px;top:655.0px;font-size:8.5px;line-height:10px;color:#e8ebef;letter-spacing:-0.74px;">1:1</span>
</div>
<svg style="left:0;top:0;will-change:transform" width="1280" height="720" viewBox="0 0 1280 720"><path d="M10.5 75 L18 53.5 L24.5 53.5 L30 75 L26 75 L24.3 68.5 L16.5 68.5 L14.3 75 Z M17.6 65 L23.4 65 L21 56.5 Z" fill="#c8232c" fill-rule="evenodd"/>
<path d="M18 53.5 L24.5 53.5 L25.5 57 L16.8 57 Z" fill="#e04a50" />
<path d="M30.25 64.0 L34.75 64.0 L32.5 67.0 Z" fill="#333"/>
<path d="M42 53 L51.5 53 L55 56.5 L55 62.5 L42 62.5 Z" fill="#d9dadc" />
<path d="M51.5 53 L51.5 56.5 L55 56.5 Z" fill="#9fa3a9" />
<path d="M60.5 62.5 L60.500 54 L65 54 L66.5 55.500 L71 55.500 L71 57 L63.5 57 Z" fill="#cfd1d4" />
<path d="M61 62.5 L64 57.5 L73 57.5 L70 62.5 Z" fill="#e3e4e6" />
<rect x="79" y="51.5" width="12.5" height="12" fill="#c9ccd0" rx="1"/>
<rect x="81.5" y="51.5" width="7.5" height="4.5" fill="#6e7682" rx="0"/>
<rect x="81.5" y="58.5" width="7.5" height="5" fill="#eceef0" rx="0"/>
<rect x="86.5" y="59.5" width="1.5" height="3" fill="#6e7682" rx="0"/>
<rect x="97" y="52" width="11" height="10" fill="#b7bbc1" rx="1"/>
<rect x="99" y="52" width="7" height="3.5" fill="#6e7682" rx="0"/>
<rect x="99" y="57.5" width="7" height="4.5" fill="#e4e6e9" rx="0"/>
<path d="M103 63 L108 57 L109.5 58.5 L104.5 64 Z" fill="#e6b84d" />
<path d="M108 57 L109 55.800 L110.500 57.300 L109.5 58.5 Z" fill="#e06c75" />
<rect x="115.5" y="51.5" width="7" height="12" fill="#8e959f" rx="1"/>
<rect x="116.5" y="53" width="5" height="8.5" fill="#aab0b8" rx="0"/>
<path d="M120.5 63.500 L120.500 58.500 L123 58.500 L124 59.500 L127 59.500 L127 63.500 Z" fill="#e6b84d" />
<rect x="137" y="51.5" width="7.5" height="12.5" fill="#b7bbc1" rx="1.2"/>
<rect x="138.2" y="53.3" width="5.1" height="8.2" fill="#4a5260" rx="0"/>
<path d="M133.5 56.5 L137.5 56.5 L137.5 54.800 L140.800 57.600 L137.500 60.400 L137.5 58.7 L133.5 58.7 Z" fill="#4ea5e8" />
<rect x="154.5" y="51.5" width="8" height="4" fill="#e9ebed" rx="0"/>
<rect x="152" y="55" width="13" height="6" fill="#d2d5d9" rx="1"/>
<rect x="154.5" y="59" width="8" height="5" fill="#f4f5f6" rx="0"/>
<rect x="155" y="61.5" width="7" height="2.5" fill="#7fb8e6" rx="0"/>
<path d="M171 57.5 L176.5 52.800 L176.5 55.500 C181 55.500 183.300 58 183.500 62 C181.800 59.800 179.800 59.300 176.500 59.400 L176.5 62 Z" fill="#e4e6e9" />
<path d="M188.2 56.3 L191.8 56.3 L190 58.7 Z" fill="#d3d7dd"/>
<path d="M209.500 57.5 L204 52.800 L204 55.500 C199.500 55.500 197.200 58 197 62 C198.700 59.800 200.700 59.300 204 59.400 L204 62 Z" fill="#5d6573" />
<path d="M215.7 56.3 L219.3 56.3 L217.5 58.7 Z" fill="#8b929e"/>
<path d="M232.0 57.5 L237.20 57.50" stroke="#e4e6e9" stroke-width="2.4"/>
<path d="M232.0 57.5 L235.68 61.18" stroke="#e4e6e9" stroke-width="2.4"/>
<path d="M232.0 57.5 L232.00 62.70" stroke="#e4e6e9" stroke-width="2.4"/>
<path d="M232.0 57.5 L228.32 61.18" stroke="#e4e6e9" stroke-width="2.4"/>
<path d="M232.0 57.5 L226.80 57.50" stroke="#e4e6e9" stroke-width="2.4"/>
<path d="M232.0 57.5 L228.32 53.82" stroke="#e4e6e9" stroke-width="2.4"/>
<path d="M232.0 57.5 L232.00 52.30" stroke="#e4e6e9" stroke-width="2.4"/>
<path d="M232.0 57.5 L235.68 53.82" stroke="#e4e6e9" stroke-width="2.4"/>
<circle cx="232" cy="57.5" r="3.6" fill="#e4e6e9"/>
<circle cx="232" cy="57.5" r="1.7" fill="#38404e"/>
<path d="M352.0 56.3 L357.0 56.3 L354.5 59.3 Z" fill="#d3d7dd"/>
<rect x="363.5" y="51.5" width="9.5" height="12" fill="#aeb4bc" rx="1"/>
<rect x="364.8" y="53" width="6.9" height="5.5" fill="#8ec4ee" rx="0"/>
<rect x="365.5" y="60" width="5.5" height="2.5" fill="#e8eaed" rx="0"/>
<path d="M382 52 L382 63.5 M392.5 52 L392.5 63.5 M382 54 L392.500 54" fill="None" stroke="#cfd3d9" stroke-width="1" />
<path d="M384 61.500 L386 59 L388 61 L390.500 58.500" fill="None" stroke="#d8c35a" stroke-width="1" />
<rect x="383.5" y="57.5" width="8" height="5.5" fill="none" stroke="#9ea5af" stroke-width="0.8" rx="0"/>
<path d="M398.5 63 C399.500 55 402.500 52.500 404 56.500 C405.500 61 408.500 58.500 410.500 51.500" fill="None" stroke="#cfd3d9" stroke-width="1.1" />
<path d="M417.5 55.5 L422.500 55.5" fill="None" stroke="#cfd3d9" stroke-width="1.2" />
<path d="M417.75 57.800000000000004 L422.25 57.800000000000004 L420 60.6 Z" fill="#d3d7dd"/>
<path d="M729.5 54.8 L733 57.6 L729.5 60.4 Z" fill="#e4e6e9" />
<path d="M878 62.500 L879.200 54.500 L881.800 54.500 L882.500 62.500 Z M884.500 62.500 L885.200 54.500 L887.800 54.500 L889 62.500 Z" fill="#dfe2e6" />
<rect x="881.5" y="56.5" width="4" height="2.5" fill="#dfe2e6" rx="0"/>
<circle cx="901.5" cy="55.3" r="2.9" fill="#dfe2e6"/>
<path d="M896.500 63.500 C896.800 59.500 899 58.800 901.500 58.800 C904 58.800 906.200 59.500 906.500 63.500 Z" fill="#dfe2e6" />
<path d="M976.2 56.3 L979.8 56.3 L978 58.7 Z" fill="#d3d7dd"/>
<path d="M989 53.5 L991 53.5 L992.800 60 L998.500 60 M992 55.500 L999.300 55.500 L998.300 58.500 L992.800 58.500" fill="None" stroke="#dfe2e6" stroke-width="1.2" />
<circle cx="993.5" cy="62.2" r="1" fill="#dfe2e6"/>
<circle cx="997.8" cy="62.2" r="1" fill="#dfe2e6"/>
<path d="M1008 62 L1013.5 52.5 L1019 62 Z M1011.300 60.200 L1015.700 60.200 L1013.5 56.300 Z" fill="#dfe2e6" fill-rule="evenodd"/>
<path d="M1023.2 56.599999999999994 L1026.8 56.599999999999994 L1025 59.0 Z" fill="#d3d7dd"/>
<path d="M1034.5 52 L1034.5 64" stroke="#4a5261" stroke-width="1" fill="none"/>
<circle cx="1048" cy="57.5" r="5.6" fill="#e9ebee"/>
<text x="1048" y="61" font-family="Liberation Sans, sans-serif" font-size="9.5" font-weight="700" text-anchor="middle" fill="#222833">?</text>
<path d="M1060.2 56.599999999999994 L1063.8 56.599999999999994 L1062 59.0 Z" fill="#d3d7dd"/>
<path d="M1118 59 L1125 59" stroke="#e4e6e9" stroke-width="1.6" fill="none"/>
<rect x="1136.5" y="52.5" width="9" height="8.5" fill="none" stroke="#e4e6e9" stroke-width="1.3" rx="0"/>
<path d="M1155.500 53 L1163.500 61 M1163.500 53 L1155.500 61" fill="None" stroke="#e4e6e9" stroke-width="1.4" />
<rect x="826" y="71.5" width="11" height="7" fill="#e9ebee" rx="2"/>
<path d="M829 77 L831.500 73.500 L834 77 Z" fill="#222833" />
<path d="M841.7 74.3 L845.3 74.3 L843.5 76.7 Z" fill="#d3d7dd"/>
<path d="M15.5 110 L38.3 87.5" stroke="#cfd3d9" stroke-width="1" fill="none"/>
<rect x="14.4" y="108.9" width="2.2" height="2.2" fill="#6db3e3" rx="0"/>
<rect x="37.199999999999996" y="86.4" width="2.2" height="2.2" fill="#6db3e3" rx="0"/>
<path d="M62 105 L78 105 C88 105 88 92.500 78 92.500" fill="None" stroke="#cfd3d9" stroke-width="1" />
<path d="M62 105 L78 105" stroke="#b9d7ea" stroke-width="1.4" fill="none"/>
<rect x="60.9" y="103.9" width="2.2" height="2.2" fill="#6db3e3" rx="0"/>
<rect x="76.9" y="103.9" width="2.2" height="2.2" fill="#6db3e3" rx="0"/>
<rect x="76.9" y="91.4" width="2.2" height="2.2" fill="#6db3e3" rx="0"/>
<circle cx="117.9" cy="99.2" r="12.3" fill="none" stroke="#cfd3d9" stroke-width="1"/>
<path d="M117.9 99.2 L125.4 91.7" stroke="#cfd3d9" stroke-width="1" fill="none"/>
<rect x="116.9" y="98.2" width="2" height="2" fill="#6db3e3" rx="0"/>
<rect x="124.4" y="90.7" width="2" height="2" fill="#6db3e3" rx="0"/>
<path d="M143 109.800 C143.500 99 152 89.500 164.700 88" fill="None" stroke="#cfd3d9" stroke-width="1" />
<rect x="142.0" y="108.8" width="2" height="2" fill="#6db3e3" rx="0"/>
<rect x="148.7" y="94.0" width="2" height="2" fill="#6db3e3" rx="0"/>
<rect x="163.7" y="87.0" width="2" height="2" fill="#6db3e3" rx="0"/>
<path d="M116.0 128.7 L120.0 128.7 L118 131.3 Z" fill="#d3d7dd"/>
<path d="M151.3 128.7 L155.3 128.7 L153.3 131.3 Z" fill="#d3d7dd"/>
<rect x="174.5" y="90" width="11" height="8.4" fill="none" stroke="#cfd3d9" stroke-width="1" rx="0"/>
<rect x="173.7" y="89.2" width="1.6" height="1.6" fill="#6db3e3" rx="0"/>
<rect x="184.7" y="97.60000000000001" width="1.6" height="1.6" fill="#6db3e3" rx="0"/>
<path d="M192.2 92.8 L195.8 92.8 L194 95.2 Z" fill="#d3d7dd"/>
<ellipse cx="179.800" cy="113" rx="6" ry="4.200" fill="none" stroke="#cfd3d9" stroke-width="1"/>
<rect x="179.0" y="112.2" width="1.6" height="1.6" fill="#6db3e3" rx="0"/>
<path d="M192.2 111.8 L195.8 111.8 L194 114.2 Z" fill="#d3d7dd"/>
<rect x="175.5" y="127" width="9.5" height="10" fill="#7d8593" stroke="#cfd3d9" stroke-width="0.8" rx="0"/>
<path d="M175.500 131 L179.500 127 M175.500 135 L183.500 127 M177.500 137 L185 129.500 M181.500 137 L185 133.500" fill="None" stroke="#c5cad1" stroke-width="0.6" />
<path d="M174.7 125.8 L174.7 138.2" stroke="#cfd3d9" stroke-width="0.8" fill="none"/>
<path d="M185.8 125.8 L185.8 138.2" stroke="#cfd3d9" stroke-width="0.8" fill="none"/>
<path d="M192.2 130.8 L195.8 130.8 L194 133.2 Z" fill="#d3d7dd"/>
<path d="M128.0 149.7 L132.60000000000002 149.7 L130.3 152.7 Z" fill="#d3d7dd"/>
<path d="M214.700 88 L217.200 90.800 L215.600 90.800 L215.600 93.300 L218.100 93.300 L218.100 91.700 L220.900 94.200 L218.100 96.700 L218.100 95.100 L215.600 95.100 L215.600 97.600 L217.200 97.600 L214.700 100.400 L212.200 97.600 L213.800 97.600 L213.800 95.100 L211.300 95.100 L211.300 96.700 L208.500 94.200 L211.300 91.700 L211.300 93.300 L213.800 93.300 L213.800 90.800 L212.200 90.800 Z" fill="#f0f2f4" />
<path d="M241.500 91 A5.200 5.200 0 1 1 236 89.200" fill="None" stroke="#cfd3d9" stroke-width="1.1" />
<path d="M235.500 87 L239.200 89.300 L235.700 91.500 Z" fill="#cfd3d9" />
<path d="M254 88.500 L264.500 88.500 M257.500 88 L261.500 97.500 M262 88.500 L257.200 97" fill="None" stroke="#cfd3d9" stroke-width="1.1" />
<circle cx="257.2" cy="98.3" r="1.5" fill="none" stroke="#cfd3d9" stroke-width="1"/>
<circle cx="261.6" cy="98.3" r="1.5" fill="none" stroke="#cfd3d9" stroke-width="1"/>
<path d="M271.8 92.8 L275.40000000000003 92.8 L273.6 95.2 Z" fill="#d3d7dd"/>
<path d="M286.500 97.500 L293.500 88 L296.500 90 L289.500 99.500 Z" fill="#e8c45a" />
<path d="M286.500 97.500 L289.500 99.500 L288 101.300 L285.200 99.500 Z" fill="#e8e9eb" />
<path d="M293.500 88 L294.500 86.700 L297.400 88.700 L296.500 90 Z" fill="#e77b6f" />
<path d="M284 101.8 L296 101.8" stroke="#9aa1ad" stroke-width="1" fill="none"/>
<circle cx="212.2" cy="108.5" r="2.4" fill="none" stroke="#cfd3d9" stroke-width="1"/>
<circle cx="212.8" cy="116.3" r="2.6" fill="none" stroke="#cfd3d9" stroke-width="1"/>
<circle cx="218.3" cy="116.3" r="2.6" fill="none" stroke="#cfd3d9" stroke-width="1"/>
<path d="M216 108.500 L220 108.500 L220 111 M218.600 109.800 L220 111.500 L221.400 109.800" fill="None" stroke="#cfd3d9" stroke-width="0.9" />
<path d="M232 118.500 L237 108 L237 118.500 Z" fill="None" stroke="#cfd3d9" stroke-width="1" />
<path d="M238.800 108 L243.800 118.500 L238.800 118.500 Z" fill="None" stroke="#cfd3d9" stroke-width="1" />
<path d="M253.500 119 L253.500 113 C253.500 109.500 255.500 107.500 259 107.500 L265 107.500" fill="None" stroke="#cfd3d9" stroke-width="1.1" />
<path d="M271.8 111.8 L275.40000000000003 111.8 L273.6 114.2 Z" fill="#d3d7dd"/>
<rect x="284.5" y="110.5" width="8" height="7.5" fill="none" stroke="#6db3e3" stroke-width="1" rx="1"/>
<path d="M286.500 110.500 L286.500 108.800 Q286.500 108 287.500 108 L294 108 Q295 108 295 109 L295 115 Q295 116 294 116 L292.500 116" fill="None" stroke="#6db3e3" stroke-width="1" />
<path d="M209 127 L209 137.500 L215 137.500 L215 127 Z M215 127 L218 127 L220.500 137.500 L215 137.500" fill="None" stroke="#cfd3d9" stroke-width="1" />
<path d="M212 135.500 L217 135.500 M215.500 134.300 L217 135.500 L215.500 136.700" fill="None" stroke="#cfd3d9" stroke-width="0.8" />
<rect x="231.5" y="126.5" width="12" height="11.5" fill="none" stroke="#cfd3d9" stroke-width="1" rx="0"/>
<rect x="231.5" y="131.5" width="6.5" height="6.5" fill="none" stroke="#cfd3d9" stroke-width="1" rx="0"/>
<rect x="254" y="126.5" width="4.3" height="4.8" fill="#6f91b5" stroke="#86a9cc" stroke-width="0.7" rx="0"/>
<rect x="260" y="126.5" width="4.3" height="4.8" fill="#6f91b5" stroke="#86a9cc" stroke-width="0.7" rx="0"/>
<rect x="254" y="132.8" width="4.3" height="4.8" fill="#6f91b5" stroke="#86a9cc" stroke-width="0.7" rx="0"/>
<rect x="260" y="132.8" width="4.3" height="4.8" fill="#6f91b5" stroke="#86a9cc" stroke-width="0.7" rx="0"/>
<path d="M271.8 130.8 L275.40000000000003 130.8 L273.6 133.2 Z" fill="#d3d7dd"/>
<path d="M296 127.500 L288 127.500 C283.500 127.500 283.500 136.500 288 136.500 L296 136.500 M296 130 L288.500 130 C286.500 130 286.500 134 288.500 134 L296 134" fill="None" stroke="#6db3e3" stroke-width="1" />
<path d="M289.3 149.7 L293.90000000000003 149.7 L291.6 152.7 Z" fill="#d3d7dd"/>
<text x="326.700" y="110" font-family="Liberation Sans, sans-serif" font-size="30" text-anchor="middle" fill="#eceef1">A</text>
<path d="M324.6 128.7 L328.6 128.7 L326.6 131.3 Z" fill="#d3d7dd"/>
<path d="M351.200 87 L351.200 111.500 M375.500 87 L375.500 111.500" fill="None" stroke="#cfd3d9" stroke-width="1" />
<path d="M352.500 91.800 L374.200 91.800 M352.500 91.800 L355.500 90.500 L355.500 93.100 Z M374.200 91.800 L371.200 90.500 L371.200 93.100 Z" fill="#cfd3d9" stroke="#cfd3d9" stroke-width="0.8" />
<path d="M355.8 107 L358.5 106.2" stroke="#e3cf5a" stroke-width="1.5" fill="none"/>
<path d="M357.5 102.2 L359.5 103.5" stroke="#e3cf5a" stroke-width="1.5" fill="none"/>
<path d="M363.2 99 L363.2 102" stroke="#e3cf5a" stroke-width="1.5" fill="none"/>
<path d="M369 102.2 L367 103.5" stroke="#e3cf5a" stroke-width="1.5" fill="none"/>
<path d="M370.8 107 L368 106.2" stroke="#e3cf5a" stroke-width="1.5" fill="none"/>
<path d="M384.500 89.500 L384.500 98.500 M396.500 89.500 L396.500 98.500 M384.500 94 L396.500 94" fill="None" stroke="#6db3e3" stroke-width="1.1" />
<path d="M403.0 92.8 L406.6 92.8 L404.8 95.2 Z" fill="#d3d7dd"/>
<path d="M385.500 117 L388.500 111.500 L393 109" fill="None" stroke="#cfd3d9" stroke-width="1" />
<circle cx="394.8" cy="108" r="1.8" fill="none" stroke="#cfd3d9" stroke-width="0.9"/>
<path d="M385 118.300 L385.300 115.300 L387.500 117 Z" fill="#cfd3d9" />
<path d="M403.0 111.8 L406.6 111.8 L404.8 114.2 Z" fill="#d3d7dd"/>
<rect x="384.5" y="127" width="11.5" height="10" fill="#d9dce0" rx="0"/>
<path d="M384.5 129.8 L396 129.8" stroke="#3b4453" stroke-width="0.7" fill="none"/>
<path d="M384.5 132.3 L396 132.3" stroke="#3b4453" stroke-width="0.7" fill="none"/>
<path d="M384.5 134.8 L396 134.8" stroke="#3b4453" stroke-width="0.7" fill="none"/>
<path d="M388.3 129.8 L388.3 137" stroke="#3b4453" stroke-width="0.7" fill="none"/>
<path d="M392.1 129.8 L392.1 137" stroke="#3b4453" stroke-width="0.7" fill="none"/>
<path d="M381.7 149.7 L386.3 149.7 L384 152.7 Z" fill="#d3d7dd"/>
<path d="M423 95.500 L431 88 L443.500 88 L435.500 95.500 Z" fill="#e1e3e6" />
<path d="M423 100 L431 93.500 L443.500 93.500 L435.500 100 Z" fill="#c4c8cd" />
<path d="M423 104.500 L431 98 L443.500 98 L435.500 104.500 Z" fill="#aeb3ba" />
<rect x="437.5" y="97.5" width="10" height="13.5" fill="#e9ebee" rx="1"/>
<rect x="439" y="99" width="7" height="5" fill="#3f8fdc" rx="0"/>
<rect x="439" y="105.5" width="7" height="1.2" fill="#b9bec5" rx="0"/>
<rect x="439" y="107.8" width="7" height="1.2" fill="#b9bec5" rx="0"/>
<circle cx="467" cy="92.5" r="3.4" fill="#f2c55a"/>
<rect x="465.6" y="96" width="2.8" height="2" fill="#e4e6e9" rx="0"/>
<circle cx="481" cy="93.5" r="3.3" fill="#f2c55a"/>
<path d="M485.3 93.5 L486.6 93.5" stroke="#f2c55a" stroke-width="1" fill="none"/>
<path d="M484.04 96.54 L484.96 97.46" stroke="#f2c55a" stroke-width="1" fill="none"/>
<path d="M481.0 97.8 L481.0 99.1" stroke="#f2c55a" stroke-width="1" fill="none"/>
<path d="M477.96 96.54 L477.04 97.46" stroke="#f2c55a" stroke-width="1" fill="none"/>
<path d="M476.7 93.5 L475.4 93.5" stroke="#f2c55a" stroke-width="1" fill="none"/>
<path d="M477.96 90.46 L477.04 89.54" stroke="#f2c55a" stroke-width="1" fill="none"/>
<path d="M481.0 89.2 L481.0 87.9" stroke="#f2c55a" stroke-width="1" fill="none"/>
<path d="M484.04 90.46 L484.96 89.54" stroke="#f2c55a" stroke-width="1" fill="none"/>
<rect x="491" y="94" width="7.5" height="6" fill="#e8b84a" rx="0"/>
<path d="M496.500 94 L496.500 91.500 A2.300 2.300 0 0 1 501 91.500 L501 92.500" fill="None" stroke="#e8b84a" stroke-width="1.2" />
<rect x="505.7" y="89.5" width="10.5" height="10.5" fill="#000" rx="0"/>
<path d="M609.0 93.0 L614.0 93.0 L611.5 96.0 Z" fill="#d3d7dd"/>
<path d="M460 112 L464 108 L471 108 L467 112 Z" fill="#d9dce0" />
<circle cx="469.5" cy="114.5" r="2.2" fill="#56c2b5"/>
<rect x="468.6" y="116.7" width="1.8" height="1.5" fill="#d9dce0" rx="0"/>
<path d="M477.6 111.0 L481.1 108.0 L487.6 108.0 L484.1 111.0 Z" fill="#e1e3e6" />
<path d="M477.6 113.6 L481.1 110.6 L487.6 110.6 L484.1 113.6 Z" fill="#c4c8cd" />
<path d="M477.6 116.2 L481.1 113.2 L487.6 113.2 L484.1 116.2 Z" fill="#aeb3ba" />
<path d="M487 115 L489.500 112.500 L490.300 113.300 L487.800 115.800 Z" fill="#d9dce0" />
<rect x="485.5" y="116" width="2.2" height="2.2" fill="#e9ebee" rx="0"/>
<path d="M496 112 L500 108 L507 108 L503 112 Z" fill="#d9dce0" />
<circle cx="505" cy="115" r="2.3" fill="#56a99d"/>
<path d="M514.7 112 L518.7 108 L525.7 108 L521.7 112 Z" fill="#d9dce0" />
<rect x="521.5" y="114.5" width="5" height="4" fill="#56c2b5" rx="0"/>
<path d="M522.700 114.500 L522.700 113.200 A1.300 1.300 0 0 1 525.300 113.200 L525.300 114.500" fill="None" stroke="#56c2b5" stroke-width="0.9" />
<path d="M533 112.0 L536.5 109.0 L543 109.0 L539.5 112.0 Z" fill="#e1e3e6" />
<path d="M533 114.6 L536.5 111.6 L543 111.6 L539.5 114.6 Z" fill="#c4c8cd" />
<path d="M533 117.2 L536.5 114.2 L543 114.2 L539.5 117.2 Z" fill="#aeb3ba" />
<circle cx="540.5" cy="109" r="2.4" fill="#9fc5e8"/>
<path d="M460 130.0 L463.5 127.0 L470 127.0 L466.5 130.0 Z" fill="#e1e3e6" />
<path d="M460 132.6 L463.5 129.6 L470 129.6 L466.5 132.6 Z" fill="#c4c8cd" />
<path d="M460 135.2 L463.5 132.2 L470 132.2 L466.5 135.2 Z" fill="#aeb3ba" />
<circle cx="469.5" cy="133.5" r="2.3" fill="#f2c55a"/>
<rect x="468.6" y="135.8" width="1.8" height="1.5" fill="#d9dce0" rx="0"/>
<path d="M477.6 130.0 L481.1 127.0 L487.6 127.0 L484.1 130.0 Z" fill="#e1e3e6" />
<path d="M477.6 132.6 L481.1 129.6 L487.6 129.6 L484.1 132.6 Z" fill="#c4c8cd" />
<path d="M477.6 135.2 L481.1 132.2 L487.6 132.2 L484.1 135.2 Z" fill="#aeb3ba" />
<path d="M486 136.500 L489.500 133 L490.300 133.800 L486.800 137.300 Z" fill="#d9dce0" />
<path d="M496 130.0 L499.5 127.0 L506 127.0 L502.5 130.0 Z" fill="#e1e3e6" />
<path d="M496 132.6 L499.5 129.6 L506 129.6 L502.5 132.6 Z" fill="#c4c8cd" />
<path d="M496 135.2 L499.5 132.2 L506 132.2 L502.5 135.2 Z" fill="#aeb3ba" />
<circle cx="505.5" cy="134.5" r="2.2" fill="#f2c55a"/>
<path d="M508.3 134.5 L509.4 134.5" stroke="#f2c55a" stroke-width="0.8" fill="none"/>
<path d="M507.48 136.48 L508.26 137.26" stroke="#f2c55a" stroke-width="0.8" fill="none"/>
<path d="M505.5 137.3 L505.5 138.4" stroke="#f2c55a" stroke-width="0.8" fill="none"/>
<path d="M503.52 136.48 L502.74 137.26" stroke="#f2c55a" stroke-width="0.8" fill="none"/>
<path d="M502.7 134.5 L501.6 134.5" stroke="#f2c55a" stroke-width="0.8" fill="none"/>
<path d="M503.52 132.52 L502.74 131.74" stroke="#f2c55a" stroke-width="0.8" fill="none"/>
<path d="M505.5 131.7 L505.5 130.6" stroke="#f2c55a" stroke-width="0.8" fill="none"/>
<path d="M507.48 132.52 L508.26 131.74" stroke="#f2c55a" stroke-width="0.8" fill="none"/>
<path d="M514.7 130 L518.7 126 L525.7 126 L521.7 130 Z" fill="#d9dce0" />
<rect x="520.5" y="133.5" width="5" height="4" fill="#e8b84a" rx="0"/>
<path d="M524.500 133.500 L524.500 132 A1.300 1.300 0 0 1 527.100 132 L527.100 132.600" fill="None" stroke="#e8b84a" stroke-width="0.9" />
<path d="M533 130.0 L536.5 127.0 L543 127.0 L539.5 130.0 Z" fill="#e1e3e6" />
<path d="M533 132.6 L536.5 129.6 L543 129.6 L539.5 132.6 Z" fill="#c4c8cd" />
<path d="M533 135.2 L536.5 132.2 L543 132.2 L539.5 135.2 Z" fill="#aeb3ba" />
<path d="M540.500 135 L542.500 133 L545 135.500 L543 137.500 Z" fill="#e8c45a" />
<path d="M525.1 149.7 L529.6999999999999 149.7 L527.4 152.7 Z" fill="#d3d7dd"/>
<path d="M637 86 L645.500 86 L649.500 90 L649.500 104.500 L637 104.500 Z" fill="#7fc0ee" />
<path d="M645.500 86 L645.500 90 L649.500 90 Z" fill="#c6e3f7" />
<rect x="625" y="93.5" width="16" height="12" fill="#8a909a" stroke="#b0b5bd" stroke-width="0.8" rx="0"/>
<rect x="624.2" y="104.7" width="1.6" height="1.6" fill="#e4e6e9" rx="0"/>
<circle cx="640.5" cy="104.5" r="5" fill="#7a808a" stroke="#c0c4ca" stroke-width="0.9"/>
<path d="M640.500 100 L640.500 104.500 L645 104.500" fill="None" stroke="#c0c4ca" stroke-width="0.8" />
<path d="M635.6 128.2 L639.6 128.2 L637.6 130.8 Z" fill="#d3d7dd"/>
<rect x="657.5" y="92" width="7" height="5.5" fill="#8a909a" stroke="#c0c4ca" stroke-width="0.7" rx="0"/>
<circle cx="665" cy="96.5" r="2.6" fill="none" stroke="#c0c4ca" stroke-width="0.8"/>
<path d="M666.500 86.500 L667.300 88.800 L669.700 88.800 L667.800 90.300 L668.500 92.600 L666.500 91.200 L664.500 92.600 L665.200 90.300 L663.300 88.800 L665.700 88.800 Z" fill="#f2c55a" />
<rect x="657.5" y="110" width="7" height="5.5" fill="#8a909a" stroke="#c0c4ca" stroke-width="0.7" rx="0"/>
<circle cx="665" cy="114.5" r="2.6" fill="none" stroke="#c0c4ca" stroke-width="0.8"/>
<path d="M664.500 110 L668 106.500 L669 107.500 L665.500 111 Z" fill="#e8b84a" />
<path d="M668 106.500 L668.600 105.900 L669.600 106.900 L669 107.500 Z" fill="#e77b6f" />
<path d="M657.500 129.500 L661.500 127 L668 132 L663.500 137.500 L657.500 133 Z" fill="#d0d3d8" />
<path d="M664.500 130.500 L668 127 L669 128 L665.500 131.500 Z" fill="#e8b84a" />
<path d="M675.2 130.8 L678.8 130.8 L677 133.2 Z" fill="#d3d7dd"/>
<path d="M660.9000000000001 149.7 L665.5 149.7 L663.2 152.7 Z" fill="#d3d7dd"/>
<rect x="706.5" y="87" width="14" height="20.5" fill="#e4e6e9" rx="1"/>
<rect x="708.3" y="89" width="10.4" height="7.5" fill="#7fc0ee" rx="0"/>
<rect x="709" y="100" width="5" height="1" fill="#666" rx="0"/>
<rect x="709" y="102.5" width="7" height="1" fill="#999" rx="0"/>
<path d="M717.500 104 L722 101 L727.500 108.500 L723 111.500 Z" fill="#e8c45a" />
<path d="M722 101 L725.500 97.500 L728.500 100 L727 101.500 L729.500 104.500 L727.500 106.500 L724.500 103.500 Z" fill="#f0f1f3" />
<path d="M756.700 94.700 L756.70 88.70 A6 6 0 0 1 761.90 91.70 Z" fill="#e5534b" />
<path d="M756.700 94.700 L761.90 91.70 A6 6 0 0 1 761.90 97.70 Z" fill="#e89a3c" />
<path d="M756.700 94.700 L761.90 97.70 A6 6 0 0 1 756.70 100.70 Z" fill="#e8d44a" />
<path d="M756.700 94.700 L756.70 100.70 A6 6 0 0 1 751.50 97.70 Z" fill="#5fc25a" />
<path d="M756.700 94.700 L751.50 97.70 A6 6 0 0 1 751.50 91.70 Z" fill="#4aa8e0" />
<path d="M756.700 94.700 L751.50 91.70 A6 6 0 0 1 756.70 88.70 Z" fill="#8a5fd0" />
<rect x="774.2" y="89.2" width="11.8" height="11.2" fill="#fe0000" stroke="#e6a09a" stroke-width="0.6" rx="0"/>
<path d="M861.2 93.5 L866.2 93.5 L863.7 96.5 Z" fill="#d3d7dd"/>
<path d="M861.2 112.0 L866.2 112.0 L863.7 115.0 Z" fill="#d3d7dd"/>
<path d="M861.2 130.0 L866.2 130.0 L863.7 133.0 Z" fill="#d3d7dd"/>
<path d="M768 113.3 L816 113.3" stroke="#e4e6e9" stroke-width="1" fill="none"/>
<path d="M768 131.5 L816 131.5" stroke="#e4e6e9" stroke-width="1" fill="none"/>
<rect x="751" y="107.5" width="11.5" height="1" fill="#e4e6e9" rx="0"/>
<rect x="751" y="111.7" width="11.5" height="2" fill="#e4e6e9" rx="0"/>
<rect x="751" y="115.9" width="11.5" height="2.8" fill="#e4e6e9" rx="0"/>
<rect x="751" y="127.0" width="11.5" height="1.2" fill="#8c939e" rx="0"/>
<rect x="751" y="129.7" width="11.5" height="1.2" fill="#8c939e" rx="0"/>
<rect x="751" y="132.4" width="11.5" height="1.2" fill="#8c939e" rx="0"/>
<rect x="751" y="135.1" width="11.5" height="1.2" fill="#8c939e" rx="0"/>
<rect x="752.0" y="127" width="0.8" height="9.5" fill="#6d7481" rx="0"/>
<rect x="754.4" y="127" width="0.8" height="9.5" fill="#6d7481" rx="0"/>
<rect x="756.8" y="127" width="0.8" height="9.5" fill="#6d7481" rx="0"/>
<rect x="759.2" y="127" width="0.8" height="9.5" fill="#6d7481" rx="0"/>
<rect x="761.6" y="127" width="0.8" height="9.5" fill="#6d7481" rx="0"/>
<path d="M792.0 149.7 L796.5999999999999 149.7 L794.3 152.7 Z" fill="#d3d7dd"/>
<path d="M863 149 L867 153 M864.500 153 L867 153 L867 150.500" fill="None" stroke="#b9bec7" stroke-width="0.9" />
<path d="M880.500 89 L878 89 L878 111 L880.500 111 M892.500 97 L895 97 L895 111 L892.500 111" fill="None" stroke="#c0c4ca" stroke-width="1" />
<rect x="882" y="93.5" width="7" height="6" fill="#4f86b8" rx="0"/>
<circle cx="885.8" cy="105.5" r="3.6" fill="#8d93a0"/>
<path d="M895.50 87.00 L896.49 90.10 L899.39 88.61 L897.90 91.51 L901.00 92.50 L897.90 93.49 L899.39 96.39 L896.49 94.90 L895.50 98.00 L894.51 94.90 L891.61 96.39 L893.10 93.49 L890.00 92.50 L893.10 91.51 L891.61 88.61 L894.51 90.10 Z" fill="#f2c55a" />
<path d="M913 89 L911.500 89 L911.500 99 L913 99 M918 89 L919.500 89 L919.500 99 L918 99" fill="None" stroke="#c0c4ca" stroke-width="0.9" />
<rect x="913" y="90.5" width="4.5" height="3" fill="#8d93a0" rx="0"/>
<circle cx="915.3" cy="96.5" r="1.7" fill="#8d93a0"/>
<path d="M917.500 92.500 L921 96 M921 92.500 L917.500 96" fill="None" stroke="#e5534b" stroke-width="1" />
<path d="M911.500 107 L910 107 L910 117 L911.500 117 M915.500 107 L917 107 L917 117 L915.500 117" fill="None" stroke="#c0c4ca" stroke-width="0.9" />
<rect x="912" y="109" width="3" height="2.5" fill="#8d93a0" rx="0"/>
<circle cx="913.5" cy="114.3" r="1.4" fill="#8d93a0"/>
<path d="M917 117.500 L921.500 112.500 L922.800 113.700 L918.300 118.700 Z" fill="#e8b84a" />
<rect x="907.5" y="123.5" width="17.5" height="16" fill="#3e5674" stroke="#7fb0da" stroke-width="0.9" rx="0"/>
<path d="M912 127 L910.500 127 L910.500 136.500 L912 136.500 M916.500 127 L918 127 L918 136.500 L916.500 136.500" fill="None" stroke="#c0c4ca" stroke-width="0.9" />
<rect x="912.5" y="128.5" width="3" height="2.5" fill="#8d93a0" rx="0"/>
<circle cx="914" cy="134" r="1.4" fill="#8d93a0"/>
<path d="M917.500 130.500 L917.500 137.500 L919.300 135.900 L920.500 138.300 L921.500 137.800 L920.300 135.500 L922.500 135.300 Z" fill="#f4f5f6" />
<path d="M914.9000000000001 149.7 L919.5 149.7 L917.2 152.7 Z" fill="#d3d7dd"/>
<rect x="947.4" y="96.2" width="22" height="5" fill="#eabf4e" rx="0.8"/>
<rect x="949.5" y="98" width="0.7" height="2.3" fill="#b89233" rx="0"/>
<rect x="951.6" y="98" width="0.7" height="2.3" fill="#b89233" rx="0"/>
<rect x="953.7" y="98" width="0.7" height="2.3" fill="#b89233" rx="0"/>
<rect x="955.8" y="98" width="0.7" height="2.3" fill="#b89233" rx="0"/>
<rect x="957.9" y="98" width="0.7" height="2.3" fill="#b89233" rx="0"/>
<rect x="960.0" y="98" width="0.7" height="2.3" fill="#b89233" rx="0"/>
<rect x="962.1" y="98" width="0.7" height="2.3" fill="#b89233" rx="0"/>
<rect x="964.2" y="98" width="0.7" height="2.3" fill="#b89233" rx="0"/>
<rect x="966.3" y="98" width="0.7" height="2.3" fill="#b89233" rx="0"/>
<path d="M956.6 128.2 L960.6 128.2 L958.6 130.8 Z" fill="#d3d7dd"/>
<path d="M992 92 L996 88.500 L996 90.500 L999 90.500" fill="None" stroke="#e8c45a" stroke-width="1.2" />
<rect x="994.5" y="92.5" width="7.5" height="6" fill="#c0c4ca" rx="0"/>
<rect x="996" y="94" width="4.5" height="3" fill="#8ea6c0" rx="0"/>
<path d="M990.500 92 L990.500 98.500 L992.300 97 L993.500 99.300 L994.500 98.800 L993.300 96.600 L995.300 96.400 Z" fill="#f4f5f6" />
<rect x="992" y="107" width="9.5" height="9.5" fill="#3f9a6a" rx="0"/>
<rect x="994" y="109" width="5.5" height="5.5" fill="#7fd0a0" rx="0"/>
<path d="M998.500 112 L998.500 119.500 L1000.300 117.900 L1001.500 120.300 L1002.500 119.800 L1001.300 117.500 L1003.500 117.300 Z" fill="#f4f5f6" />
<rect x="993" y="126.5" width="8" height="11.5" fill="#dfe2e6" rx="0.8"/>
<rect x="994.3" y="128" width="5.4" height="2.5" fill="#3b4453" rx="0"/>
<rect x="994.3" y="131.8" width="1.3" height="1.3" fill="#3b4453" rx="0"/>
<rect x="996.3" y="131.8" width="1.3" height="1.3" fill="#3b4453" rx="0"/>
<rect x="998.3" y="131.8" width="1.3" height="1.3" fill="#3b4453" rx="0"/>
<rect x="994.3" y="133.8" width="1.3" height="1.3" fill="#3b4453" rx="0"/>
<rect x="996.3" y="133.8" width="1.3" height="1.3" fill="#3b4453" rx="0"/>
<rect x="998.3" y="133.8" width="1.3" height="1.3" fill="#3b4453" rx="0"/>
<rect x="994.3" y="135.8" width="1.3" height="1.3" fill="#3b4453" rx="0"/>
<rect x="996.3" y="135.8" width="1.3" height="1.3" fill="#3b4453" rx="0"/>
<rect x="998.3" y="135.8" width="1.3" height="1.3" fill="#3b4453" rx="0"/>
<path d="M986.4000000000001 149.7 L991.0 149.7 L988.7 152.7 Z" fill="#d3d7dd"/>
<rect x="1027.5" y="90" width="13" height="17" fill="#d9a55c" rx="1"/>
<rect x="1031.5" y="88" width="5.5" height="3.5" fill="#eceef0" rx="1.5"/>
<path d="M1033 93.500 L1042.500 93.500 L1047 98 L1047 111.500 L1033 111.500 Z" fill="#e9ebee" />
<path d="M1042.500 93.500 L1042.500 98 L1047 98 Z" fill="#b5bac2" />
<path d="M1035.2 128.2 L1039.2 128.2 L1037.2 130.8 Z" fill="#d3d7dd"/>
<rect x="1067.5" y="89" width="8" height="10" fill="#c9cdd3" rx="0"/>
<rect x="1068.8" y="91.0" width="5" height="0.9" fill="#5a6270" rx="0"/>
<rect x="1068.8" y="93.3" width="5" height="0.9" fill="#5a6270" rx="0"/>
<rect x="1068.8" y="95.6" width="5" height="0.9" fill="#5a6270" rx="0"/>
<path d="M1073 93 L1078.500 100.500 M1078.500 93 L1073 100.500" fill="None" stroke="#e4e6e9" stroke-width="1.1" />
<circle cx="1073.2" cy="101" r="1.1" fill="none" stroke="#e4e6e9" stroke-width="0.8"/>
<circle cx="1078.3" cy="101" r="1.1" fill="none" stroke="#e4e6e9" stroke-width="0.8"/>
<path d="M1068.500 108 L1073 108 L1075 110 L1075 117 L1068.500 117 Z" fill="#aeb3ba" />
<path d="M1071.500 110.500 L1076 110.500 L1078 112.500 L1078 119.500 L1071.500 119.500 Z" fill="#e4e6e9" />
<path d="M1099 90.600 L1109.500 90.600 L1109.500 98 L1123.700 98 L1123.700 107.800 L1099 107.800 Z" fill="#dedfe2" />
<path d="M1110.0 128.2 L1114.0 128.2 L1112 130.8 Z" fill="#d3d7dd"/>
<path d="M1114.7 149.7 L1119.3 149.7 L1117 152.7 Z" fill="#d3d7dd"/>
<path d="M1131.500 149 L1135.500 153 M1133 153 L1135.500 153 L1135.500 150.500" fill="None" stroke="#b9bec7" stroke-width="0.9" />
<path d="M193 166.500 L199.500 173 M199.500 166.500 L193 173" fill="None" stroke="#dfe2e6" stroke-width="1.4" />
<path d="M222.800 166.500 L222.800 173.500 M219.300 170 L226.300 170" fill="None" stroke="#c9cdd4" stroke-width="1.5" />
<path d="M120.900 653 L120.900 660 M117.400 656.500 L124.400 656.500" fill="None" stroke="#c9cdd4" stroke-width="1.4" />
<path d="M761.0 652.5 L761.0 666.5" stroke="#f4f6f8" stroke-width="1.1" fill="none"/>
<path d="M759 655.0 L773.5 655.0" stroke="#f4f6f8" stroke-width="1.1" fill="none"/>
<path d="M765.8 652.5 L765.8 666.5" stroke="#f4f6f8" stroke-width="1.1" fill="none"/>
<path d="M759 659.5 L773.5 659.5" stroke="#f4f6f8" stroke-width="1.1" fill="none"/>
<path d="M770.6 652.5 L770.6 666.5" stroke="#f4f6f8" stroke-width="1.1" fill="none"/>
<path d="M759 664.0 L773.5 664.0" stroke="#f4f6f8" stroke-width="1.1" fill="none"/>
<rect x="780.0" y="655.5" width="1.4" height="1.4" fill="#e6e9ed" rx="0"/>
<rect x="783.6" y="655.5" width="1.4" height="1.4" fill="#e6e9ed" rx="0"/>
<rect x="787.2" y="655.5" width="1.4" height="1.4" fill="#e6e9ed" rx="0"/>
<rect x="780.0" y="659.1" width="1.4" height="1.4" fill="#e6e9ed" rx="0"/>
<rect x="783.6" y="659.1" width="1.4" height="1.4" fill="#e6e9ed" rx="0"/>
<rect x="787.2" y="659.1" width="1.4" height="1.4" fill="#e6e9ed" rx="0"/>
<rect x="780.0" y="662.7" width="1.4" height="1.4" fill="#e6e9ed" rx="0"/>
<rect x="783.6" y="662.7" width="1.4" height="1.4" fill="#e6e9ed" rx="0"/>
<rect x="787.2" y="662.7" width="1.4" height="1.4" fill="#e6e9ed" rx="0"/>
<path d="M798.0 658.2 L802.0 658.2 L800 660.8 Z" fill="#d3d7dd"/>
<path d="M806.5 652 L806.5 667" stroke="#3a4250" stroke-width="1" fill="none"/>
<path d="M811.500 653 L811.500 665.500 L821.500 665.500" fill="None" stroke="#aeb4bd" stroke-width="1.1" />
<path d="M811.500 661.500 L815.500 661.500 L815.500 665.500" fill="None" stroke="#aeb4bd" stroke-width="0.7" />
<circle cx="833.5" cy="660.5" r="5" fill="none" stroke="#f4f6f8" stroke-width="1.1"/>
<path d="M828.500 660.500 L840 660.500 M833.500 660.500 L838.500 654" fill="None" stroke="#f4f6f8" stroke-width="1" />
<path d="M847.3 658.2 L851.3 658.2 L849.3 660.8 Z" fill="#d3d7dd"/>
<path d="M860 653.500 L868.500 665.500 M864.500 652.500 L864.500 666 M868.500 656 L860 663" fill="None" stroke="#707887" stroke-width="1" />
<path d="M877.2 658.2 L881.2 658.2 L879.2 660.8 Z" fill="#d3d7dd"/>
<path d="M888.500 665.500 L900.500 665.500 M888.500 665.500 L899.500 655" fill="None" stroke="#aeb4bd" stroke-width="1.1" />
<rect x="908.5" y="654.5" width="10.5" height="10.5" fill="none" stroke="#f4f6f8" stroke-width="1.1" rx="0"/>
<rect x="907" y="653" width="3" height="3" fill="#f4f6f8" rx="0"/>
<path d="M926.0 658.2 L930.0 658.2 L928 660.8 Z" fill="#d3d7dd"/>
<rect x="938" y="653.3" width="5.5" height="1.8" fill="#f4f6f8" rx="0"/>
<rect x="938" y="656.9" width="12" height="1.8" fill="#f4f6f8" rx="0"/>
<rect x="938" y="660.5" width="8" height="1.8" fill="#f4f6f8" rx="0"/>
<rect x="938" y="664.0999999999999" width="12" height="1.8" fill="#f4f6f8" rx="0"/>
<path d="M963 653.0 L964.2 660.0 L968.5 665.0 L967.3 666.0 L963 662.0 L958.7 666.0 L957.5 665.0 L961.8 660.0 Z" fill="#f4f6f8" />
<rect x="967" y="652.5" width="3.2" height="3.2" fill="none" stroke="#f4f6f8" stroke-width="0.8" rx="0"/>
<path d="M982 653.0 L983.2 660.0 L987.5 665.0 L986.3 666.0 L982 662.0 L977.7 666.0 L976.5 665.0 L980.8 660.0 Z" fill="#f4f6f8" />
<path d="M987 652.500 L987 656.500 M985 654.500 L989 654.500" fill="None" stroke="#f4f6f8" stroke-width="0.9" />
<path d="M1000.6 653.0 L1001.8000000000001 660.0 L1006.1 665.0 L1004.9 666.0 L1000.6 662.0 L996.3000000000001 666.0 L995.1 665.0 L999.4 660.0 Z" fill="#e6e9ed" />
<path d="M1027.0 658.5 L1031.0 658.5 L1029 661.0999999999999 Z" fill="#d3d7dd"/>
<path d="M1045.3 659.5 L1051.3 659.5" stroke="#e6e9ed" stroke-width="2.6" fill="none"/>
<path d="M1045.3 659.5 L1049.54 663.74" stroke="#e6e9ed" stroke-width="2.6" fill="none"/>
<path d="M1045.3 659.5 L1045.3 665.5" stroke="#e6e9ed" stroke-width="2.6" fill="none"/>
<path d="M1045.3 659.5 L1041.06 663.74" stroke="#e6e9ed" stroke-width="2.6" fill="none"/>
<path d="M1045.3 659.5 L1039.3 659.5" stroke="#e6e9ed" stroke-width="2.6" fill="none"/>
<path d="M1045.3 659.5 L1041.06 655.26" stroke="#e6e9ed" stroke-width="2.6" fill="none"/>
<path d="M1045.3 659.5 L1045.3 653.5" stroke="#e6e9ed" stroke-width="2.6" fill="none"/>
<path d="M1045.3 659.5 L1049.54 655.26" stroke="#e6e9ed" stroke-width="2.6" fill="none"/>
<circle cx="1045.3" cy="659.5" r="4.2" fill="#e6e9ed"/>
<circle cx="1045.3" cy="659.5" r="1.9" fill="#222833"/>
<path d="M1058.4 658.2 L1062.4 658.2 L1060.4 660.8 Z" fill="#d3d7dd"/>
<path d="M1075.900 653.500 L1075.900 665.500 M1069.900 659.500 L1081.900 659.500" fill="None" stroke="#e6e9ed" stroke-width="1.6" />
<rect x="1091" y="654" width="4.5" height="4.5" fill="none" stroke="#aeb4bd" stroke-width="1" rx="0"/>
<circle cx="1101.5" cy="656.5" r="2.5" fill="none" stroke="#aeb4bd" stroke-width="1"/>
<path d="M1093 665.500 L1096.500 660 L1100 665.500 Z" fill="None" stroke="#aeb4bd" stroke-width="1" />
<rect x="1110.5" y="660" width="7" height="5.5" fill="#e8b84a" rx="0"/>
<path d="M1114.500 652.500 L1114.500 660 M1111.500 655 L1121 655" fill="None" stroke="#6db3e3" stroke-width="1.6" />
<path d="M1117.500 662.500 L1120 665.500 L1124 659" fill="None" stroke="#5fc25a" stroke-width="1.6" />
<rect x="1132.5" y="654.5" width="12.5" height="10" fill="none" stroke="#e6e9ed" stroke-width="1.2" rx="0"/>
<path d="M1135 660 L1135 657 L1138 657 M1142.500 659 L1142.500 662 L1139.500 662" fill="None" stroke="#e6e9ed" stroke-width="1" />
<rect x="1151.5" y="654.5" width="12.5" height="1.8" fill="#e6e9ed" rx="0"/>
<rect x="1151.5" y="658.7" width="12.5" height="1.8" fill="#e6e9ed" rx="0"/>
<rect x="1151.5" y="662.9" width="12.5" height="1.8" fill="#e6e9ed" rx="0"/>
<rect x="238" y="629" width="697" height="20" fill="#ffffff" fill-opacity="0.78" stroke="#b0b4ba" stroke-width="0.8"/>
<rect x="238" y="628.500" width="43" height="20" fill="#6d737e" fill-opacity="0.95"/>
<rect x="240.5" y="632" width="1.2" height="1.5" fill="#d8dadd" rx="0"/>
<rect x="243" y="632" width="1.2" height="1.5" fill="#d8dadd" rx="0"/>
<rect x="240.5" y="635" width="1.2" height="1.5" fill="#d8dadd" rx="0"/>
<rect x="243" y="635" width="1.2" height="1.5" fill="#d8dadd" rx="0"/>
<rect x="240.5" y="638" width="1.2" height="1.5" fill="#d8dadd" rx="0"/>
<rect x="243" y="638" width="1.2" height="1.5" fill="#d8dadd" rx="0"/>
<rect x="240.5" y="641" width="1.2" height="1.5" fill="#d8dadd" rx="0"/>
<rect x="243" y="641" width="1.2" height="1.5" fill="#d8dadd" rx="0"/>
<rect x="240.5" y="644" width="1.2" height="1.5" fill="#d8dadd" rx="0"/>
<rect x="243" y="644" width="1.2" height="1.5" fill="#d8dadd" rx="0"/>
<path d="M249 634.500 L256 641.500 M256 634.500 L249 641.500" fill="None" stroke="#f0f1f3" stroke-width="1.5" />
<path d="M266.500 642.500 L273 636 M272 633 A3 3 0 1 0 276 637" fill="None" stroke="#f0f1f3" stroke-width="1.5" />
<rect x="284" y="633" width="12.5" height="9" fill="#f4f5f6" stroke="#666" stroke-width="0.8" rx="0"/>
<rect x="284" y="633" width="12.5" height="2.2" fill="#777" rx="0"/>
<path d="M298.2 636.8 L301.8 636.8 L300 639.2 Z" fill="#444"/>
<path d="M925.500 640.500 L929.500 635.500 L933.500 640.500 Z" fill="#8a8e95" />
<text x="308.500" y="642" font-family="Liberation Mono, monospace" font-style="italic" font-size="9" fill="#a9adb3" textLength="80" lengthAdjust="spacingAndGlyphs">Введите команду</text></svg>
</body></html>
